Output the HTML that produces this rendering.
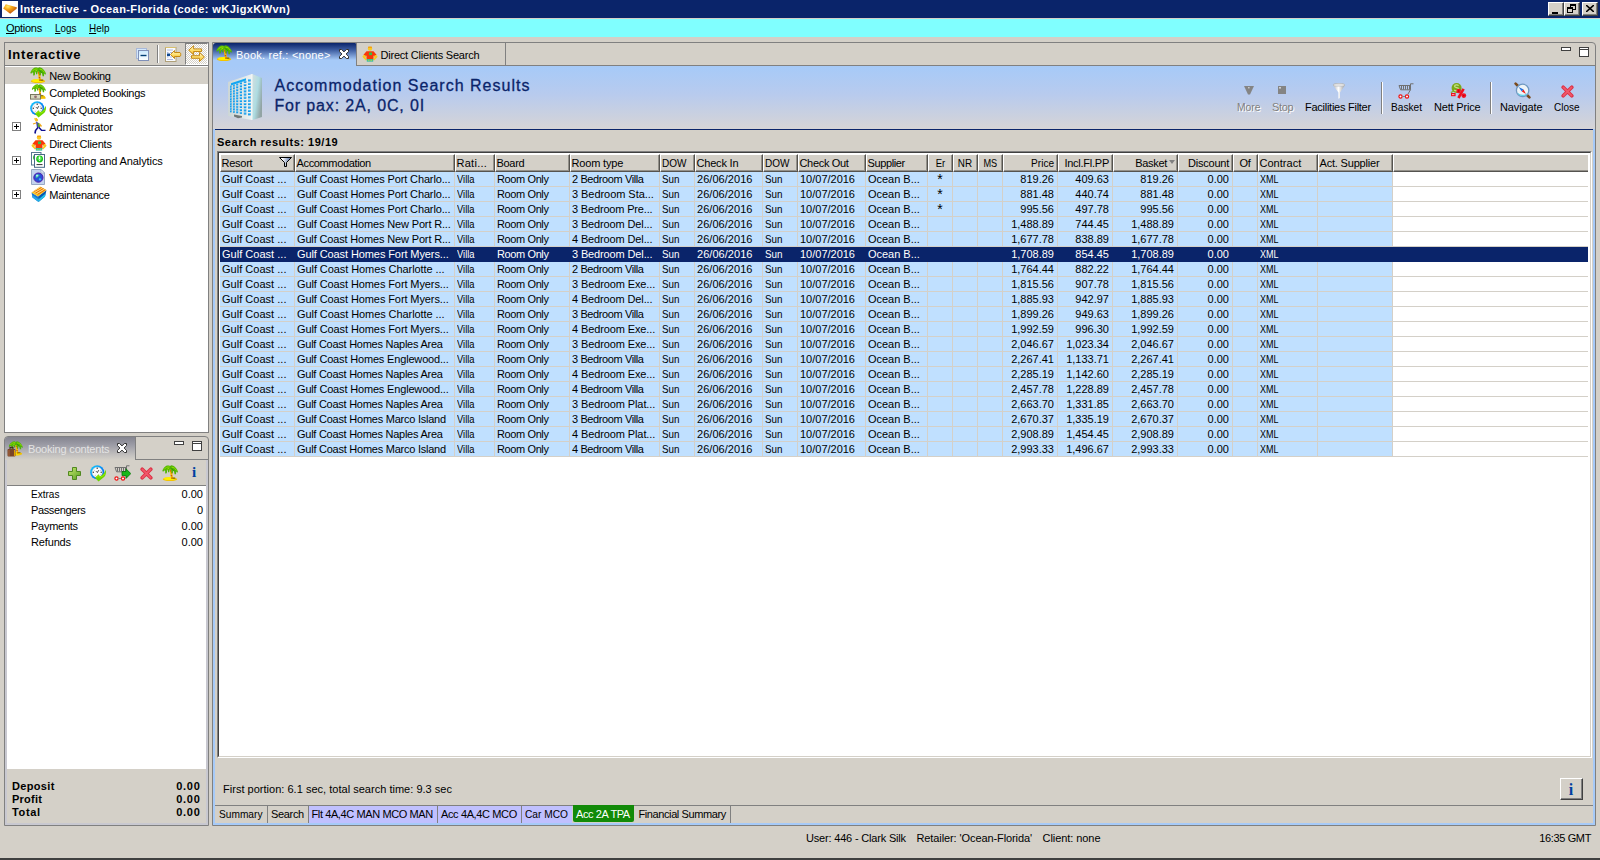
<!DOCTYPE html>
<html><head><meta charset="utf-8"><title>Interactive</title>
<style>
*{box-sizing:border-box;margin:0;padding:0}
html,body{width:1600px;height:860px;overflow:hidden}
body{background:#d4d0c8;font-family:"Liberation Sans",sans-serif;font-size:11px;color:#000;position:relative;line-height:13px}
.a{position:absolute}
.a>svg,.wb>svg{display:block}
.t{position:absolute;white-space:nowrap;line-height:13px;height:13px}
.b{font-weight:bold}
u{text-decoration:underline}
#title{left:0;top:0;width:1600px;height:18px;background:#0a246a}
#menu{left:0;top:19px;width:1600px;height:18px;background:#80ffff}
.wb{position:absolute;top:2px;width:16px;height:14px;background:#d4d0c8;border:1px solid;border-color:#fff #404040 #404040 #fff;box-shadow:inset -1px -1px 0 #808080}
.wb i{position:absolute;display:block}
.panel{position:absolute;border:1px solid #808080;background:#d4d0c8}
.tblbox{position:absolute;left:217px;top:151px;width:1375px;height:607px;background:#fff;border:1px solid;border-color:#808080 #fff #fff #808080}
.tblbox:before{content:"";position:absolute;left:0;top:0;right:0;bottom:0;border:1px solid;border-color:#404040 #d4d0c8 #d4d0c8 #404040}
.th{position:absolute;top:154px;height:18px;background:#d4d0c8;border-left:1px solid #fff;border-right:1px solid #55534f;border-bottom:1px solid #55534f;border-top:1px solid #fff;box-shadow:inset -1px -1px 0 #94918a;white-space:nowrap;overflow:hidden;line-height:13px;padding:2px 0 0 .5px}
.th.r{text-align:right;padding-right:3px}
.th.bk{padding-right:10px}
.th.c{text-align:center;padding-left:0;padding-right:1px}
.tr{position:absolute;left:220px;width:1173px;height:14px;background:#c0e0ff}
.hl{position:absolute;left:220px;width:1368px;height:1px;background:#d4d0c8}
.td{position:absolute;top:0;height:14px;line-height:13px;padding:1px 0 0 2px;white-space:nowrap;overflow:hidden;border-right:1px solid #d4d0c8}
.td.r{text-align:right;padding-right:3px}
.td.c{text-align:center;padding-left:0}
.tr.sel{background:#0a246a;color:#fff;width:1368px;height:15px}
.tr.sel .td{border-right-color:#0a246a}
.flt{position:absolute;left:58px;top:2px}
.sortarr{position:absolute;right:2px;top:5px;width:0;height:0;border-left:3.5px solid transparent;border-right:3.5px solid transparent;border-top:4px solid #808080}

.ast{font-size:14px;line-height:13px;position:relative;top:0}

</style></head>
<body>
<!-- title bar -->
<div class="a" id="title"></div>
<div class="a" style="left:2px;top:1px;width:16px;height:16px"><svg width="16" height="16" viewBox="0 0 16 16"><defs><radialGradient id="og" cx=".35" cy=".25" r=".8"><stop offset="0" stop-color="#ffe868"/><stop offset=".35" stop-color="#f8a818"/><stop offset="1" stop-color="#b84808"/></radialGradient></defs><rect width="16" height="16" fill="#fff"/><path d="M1.2 7.4L3.8 3.2L14.8 6.2L14.6 7.8L8.2 12.8Z" fill="url(#og)"/></svg></div>
<div class="wb" style="left:1548px"><i style="left:3px;top:9px;width:6px;height:2px;background:#000"></i></div>
<div class="wb" style="left:1564px"><i style="left:5px;top:1px;width:6px;height:6px;border:1px solid #000;border-top-width:2px"></i><i style="left:2px;top:4px;width:6px;height:6px;border:1px solid #000;border-top-width:2px;background:#d4d0c8"></i></div>
<div class="wb" style="left:1582px"><svg class="a" style="left:3px;top:2px" width="8" height="7" viewBox="0 0 8 7"><path d="M0 0L8 7M8 0L0 7" stroke="#000" stroke-width="1.6"/></svg></div>
<!-- menu -->
<div class="a" id="menu"></div>

<!-- left panel 1 -->
<div class="panel" style="left:4px;top:42px;width:205px;height:391px"></div>
<div class="a" style="left:5px;top:65px;width:203px;height:1px;background:#808080"></div>
<div class="a" style="left:5px;top:66px;width:203px;height:366px;background:#fff"></div>
<div class="a" style="left:5px;top:67px;width:203px;height:17px;background:#d4d0c8"></div>
<div class="a" style="left:136px;top:48px"><svg width="13" height="13" viewBox="0 0 13 13"><defs><linearGradient id="cg" x1="0" y1="0" x2="0" y2="1"><stop offset="0" stop-color="#c8e8ff"/><stop offset="1" stop-color="#fff"/></linearGradient></defs><rect x=".5" y=".5" width="10" height="10" fill="#d4e8fc" stroke="#a8b8d8"/><rect x="2.5" y="2.5" width="10" height="10" fill="url(#cg)" stroke="#8090b8"/><path d="M4.5 7.5h6" stroke="#003c74" stroke-width="1.4"/></svg></div>
<div class="a" style="left:157px;top:45px;width:2px;height:18px;border-left:1px solid #808080;border-right:1px solid #fff"></div>
<div class="a" style="left:165px;top:47px"><svg width="17" height="15" viewBox="0 0 17 15"><defs><linearGradient id="ag" x1="0" y1="0" x2="0" y2="1"><stop offset="0" stop-color="#fff8d0"/><stop offset=".5" stop-color="#ffe070"/><stop offset="1" stop-color="#f0b020"/></linearGradient></defs><rect x=".5" y=".5" width="10.5" height="14" fill="#f8fbff" stroke="#b0a078"/><path d="M.5 1V.5H11" stroke="#d8c070" fill="none"/><path d="M2 3h6M2 5.5h1.5M5 5.5h2M2 10h1.5M5 10h2M2 12.5h6" stroke="#b0b8e0" stroke-width="1"/><rect x="2" y="6.5" width="3" height="2.6" fill="#104890"/><path d="M5.5 7.5L9.5 3.5V5.5H15C16 5.5 16 9.5 15 9.5H9.5V11.5Z" fill="url(#ag)" stroke="#c08008" stroke-width=".9"/></svg></div>
<div class="a" style="left:185px;top:43px;width:23px;height:22px;background:repeating-conic-gradient(#fff 0 25%,#d4d0c8 0 50%) 0 0/2px 2px;border:1px solid;border-color:#808080 #fff #fff #808080"></div>
<div class="a" style="left:188px;top:45px"><svg width="17" height="17" viewBox="0 0 17 17"><defs><linearGradient id="ag2" x1="0" y1="0" x2="0" y2="1"><stop offset="0" stop-color="#fff8d0"/><stop offset=".5" stop-color="#ffe070"/><stop offset="1" stop-color="#f0b020"/></linearGradient></defs><path d="M.7 5.2L5.6 .7V3.9H13.6V6.5H5.6V9.7Z" fill="url(#ag2)" stroke="#c08008" stroke-width=".9"/><path d="M16.4 12L11.5 7.5V10.7H3.5V13.3H11.5V16.5Z" fill="url(#ag2)" stroke="#c08008" stroke-width=".9"/></svg></div>
<div class="a" style="left:30px;top:67px"><svg width="16" height="16" viewBox="0 0 16 16"><ellipse cx="8" cy="14.2" rx="7.2" ry="2" fill="#f4c400"/><ellipse cx="7.6" cy="13.6" rx="5.6" ry="1.5" fill="#fff000"/><path d="M7.3 3.5L9.3 3.5L11.2 13.8L9.2 13.8Z" fill="#f6bc00"/><path d="M8 5.2h1.4v1.2h-1.4zM9.4 7h1.2v1.6h-1.2zM8.8 10h1.3v1.2h-1.3zM9.2 12.6h1.4v1.2h-1.4z" fill="#c85a04"/><rect x="10.6" y="12.6" width="2.6" height="1.1" fill="#6a4a10"/><path d="M.3 5.9C1 3.6 2.6 1.6 4.8 .5L7 .4L8 1L9.4 .2L11.2 .8C13.4 2 15.2 4.2 15.9 6.6L15.5 7.8L14.2 6.4L14 9.3L12.6 9.2L12 6.4L11.1 5.8L10.6 8.2L9.5 8L9.1 4.8L7.6 4.4L7.2 7.2L6 7.2L6 4.9L5.1 5.5L4.8 8.3L3.2 8.6L3.2 5.7L2.1 5.4L1.2 6.8Z" fill="#4fb406"/><path d="M2 4.5C3.4 2.6 5.4 1.6 7.6 2M9.6 2.2C11.6 2.2 13.2 3.4 14.4 5.4M7.2 3.2C6 3.6 5.2 4.2 4.6 5" stroke="#96e000" stroke-width="1" fill="none"/><path d="M9.4 3.6C10.4 4 11.4 4.8 12 5.8" stroke="#2c9000" stroke-width=".8" fill="none"/></svg></div>
<div class="a" style="left:30px;top:84px"><svg width="16" height="16" viewBox="0 0 16 16"><g transform="translate(1.5 0) scale(.9)"><ellipse cx="8" cy="14.2" rx="7.2" ry="2" fill="#f4c400"/><ellipse cx="7.6" cy="13.6" rx="5.6" ry="1.5" fill="#fff000"/><path d="M7.3 3.5L9.3 3.5L11.2 13.8L9.2 13.8Z" fill="#f6bc00"/><path d="M8 5.2h1.4v1.2h-1.4zM9.4 7h1.2v1.6h-1.2zM8.8 10h1.3v1.2h-1.3zM9.2 12.6h1.4v1.2h-1.4z" fill="#c85a04"/><rect x="10.6" y="12.6" width="2.6" height="1.1" fill="#6a4a10"/><path d="M.3 5.9C1 3.6 2.6 1.6 4.8 .5L7 .4L8 1L9.4 .2L11.2 .8C13.4 2 15.2 4.2 15.9 6.6L15.5 7.8L14.2 6.4L14 9.3L12.6 9.2L12 6.4L11.1 5.8L10.6 8.2L9.5 8L9.1 4.8L7.6 4.4L7.2 7.2L6 7.2L6 4.9L5.1 5.5L4.8 8.3L3.2 8.6L3.2 5.7L2.1 5.4L1.2 6.8Z" fill="#4fb406"/><path d="M2 4.5C3.4 2.6 5.4 1.6 7.6 2M9.6 2.2C11.6 2.2 13.2 3.4 14.4 5.4M7.2 3.2C6 3.6 5.2 4.2 4.6 5" stroke="#96e000" stroke-width="1" fill="none"/><path d="M9.4 3.6C10.4 4 11.4 4.8 12 5.8" stroke="#2c9000" stroke-width=".8" fill="none"/></g><rect x="0.5" y="10.5" width="10" height="4.6" fill="#d8d8c0" stroke="#787860" stroke-width="1"/><circle cx="5.5" cy="12.8" r="1.4" fill="#907070"/><rect x="11" y="13" width="4.5" height="1.8" fill="#f4c000"/></svg></div>
<div class="a" style="left:30px;top:101px"><svg width="17" height="17" viewBox="0 0 17 17"><defs><linearGradient id="ck" x1="0" y1="0" x2="1" y2="1"><stop offset="0" stop-color="#10d0ff"/><stop offset=".5" stop-color="#0890f8"/><stop offset="1" stop-color="#0858f0"/></linearGradient></defs><circle cx="7.2" cy="7.3" r="7" fill="url(#ck)"/><circle cx="7.2" cy="7.3" r="5.1" fill="#fbfbfb" stroke="#e8d8d0" stroke-width=".5"/><circle cx="7.2" cy="3.3" r=".7" fill="#303030"/><circle cx="3.3" cy="7.3" r=".7" fill="#303030"/><circle cx="11.2" cy="7.3" r=".7" fill="#303030"/><circle cx="10.2" cy="5.2" r=".45" fill="#808890"/><circle cx="4.4" cy="5.2" r=".45" fill="#a0a0a8"/><circle cx="10.2" cy="9.4" r=".45" fill="#9090a0"/><circle cx="5.2" cy="10.2" r=".45" fill="#9090a0"/><path d="M6 6.2L7.4 7.6L8.6 5.2" stroke="#484848" stroke-width="1" fill="none"/><path d="M15.9 4.8C16.3 8 15.6 10.6 14.4 11.8L8.5 16.4L5 12.8L8.6 9.2L9.6 11C11.6 11 13.6 9.4 15.9 4.8Z" fill="#6cd400"/><path d="M6.4 12.8L8.6 10.6L9.4 12C11.4 12 13.4 11 14.8 8.6" stroke="#98f000" stroke-width="1" fill="none"/></svg></div>
<div class="a" style="left:30px;top:118px"><svg width="16" height="16" viewBox="0 0 16 16"><circle cx="6.5" cy="2" r="1.6" fill="#f8c020"/><path d="M4 1L7 .4" stroke="#f8c020" stroke-width="1"/><path d="M6 3.5L9.5 5.5L10 9.5L7 10Z" fill="#3838a8"/><path d="M7.5 4.5L9.5 5.8L10 9L8 9Z" fill="#58a828"/><path d="M9.5 6L11.5 8.5" stroke="#f0a818" stroke-width="1.4"/><path d="M6 5L3 6" stroke="#f0a818" stroke-width="1.2"/><path d="M8 9.5L5.5 12.5L5 15.5" stroke="#101090" stroke-width="1.6" fill="none"/><path d="M9 9.5L11.5 12.2L15.5 12.4" stroke="#101090" stroke-width="1.4" fill="none"/></svg></div>
<div class="a" style="left:30.5px;top:135px"><svg width="16" height="16" viewBox="0 0 16 16"><circle cx="8" cy="2.6" r="2.2" fill="#f8c820"/><path d="M6 1.2h4" stroke="#f89000" stroke-width="1"/><path d="M4.5 5.2h7l3 3.6-1.6 2-1.4-1.2v4.2h-7v-4.2l-1.4 1.2-1.6-2z" fill="#f83808"/><circle cx="2.3" cy="10.6" r="1.7" fill="#f8c820"/><circle cx="13.7" cy="10.6" r="1.7" fill="#f8c820"/><path d="M2 11.5L4.5 14M14 11.5L11.5 14" stroke="#f8c820" stroke-width="1.6"/><rect x="7" y="6.5" width="3" height="2.6" fill="#38c048"/><rect x="4.8" y="13" width="6.4" height="2.6" fill="#18b8b0"/><path d="M6.2 13.6v1.6M8 13.6v1.6M9.8 13.6v1.6" stroke="#f8e020" stroke-width=".8"/></svg></div>
<div class="a" style="left:31px;top:152px"><svg width="16" height="16" viewBox="0 0 16 16"><rect x=".5" y=".5" width="9.5" height="12.5" fill="#fff" stroke="#587890"/><circle cx="5" cy="5.5" r="3" fill="#30c030"/><rect x="3.5" y="2.5" width="10" height="12.8" fill="#fff" stroke="#486888"/><circle cx="8.6" cy="7" r="3.4" fill="#18c018"/><circle cx="8.6" cy="6.4" r="2.2" fill="#60e860"/><path d="M8.6 4.6v2.6M8.6 8.2v.9" stroke="#fff" stroke-width="1.1"/><path d="M5.5 12.6h6" stroke="#303030" stroke-width="1"/></svg></div>
<div class="a" style="left:31px;top:169px"><svg width="16" height="16" viewBox="0 0 16 16"><path d="M.5 .5H10L13.5 4V15.5H.5Z" fill="#c4d4ee" stroke="#98a8c4"/><path d="M10 .5V4H13.5Z" fill="#f4f8ff" stroke="#98a8c4" stroke-width=".8"/><circle cx="7.4" cy="8.6" r="4.6" fill="#2850d8"/><circle cx="7.4" cy="8.6" r="4.6" fill="none" stroke="#5018a8" stroke-width="1"/><path d="M5 6.2C6.4 5 8 5.4 8.6 6.6C8 7.6 6.8 7.4 6.4 8.6C5.8 9.6 5 8.8 4.6 8Z" fill="#38c8a0"/><path d="M8 9.4C9.2 9 10.4 9.6 10.2 10.8C9.4 11.8 8.2 11.6 7.8 10.6Z" fill="#30c0e8"/><circle cx="6" cy="6.6" r="1.1" fill="#c8f0ff" opacity=".8"/></svg></div>
<div class="a" style="left:31px;top:186px"><svg width="16" height="16" viewBox="0 0 16 16"><path d="M.5 6.5L7 10.5L7.5 16L1.5 11.5Z" fill="#1878d0"/><path d="M7 10.5L15.5 4L14 10.5L7.5 16Z" fill="#0858b0"/><path d="M7.2 13.5L14.6 7.5L14 10.5L7.5 16Z" fill="#20c0e8"/><path d="M1 9L7.2 13L7.5 16L1.5 11.5Z" fill="#28a8e8"/><path d="M.5 6.5L9 .5L15.5 4L7 10.5Z" fill="#f8c020"/><path d="M2.5 5.8L10.5 1.4M4.5 7L12.5 2.4M6.4 8.4L14.4 3.6" stroke="#e86808" stroke-width="1.1"/><path d="M1.5 6L9.5 1M3.5 6.6L11.5 2M5.5 7.8L13.5 3" stroke="#fff0a0" stroke-width=".7"/></svg></div>
<div class="a" style="left:12px;top:122px"><svg width="9" height="9" viewBox="0 0 9 9"><rect x=".5" y=".5" width="8" height="8" fill="#fff" stroke="#808080"/><path d="M2 4.5h5M4.5 2v5" stroke="#000" stroke-width="1"/></svg></div>
<div class="a" style="left:12px;top:156px"><svg width="9" height="9" viewBox="0 0 9 9"><rect x=".5" y=".5" width="8" height="8" fill="#fff" stroke="#808080"/><path d="M2 4.5h5M4.5 2v5" stroke="#000" stroke-width="1"/></svg></div>
<div class="a" style="left:12px;top:190px"><svg width="9" height="9" viewBox="0 0 9 9"><rect x=".5" y=".5" width="8" height="8" fill="#fff" stroke="#808080"/><path d="M2 4.5h5M4.5 2v5" stroke="#000" stroke-width="1"/></svg></div>

<!-- left panel 2 -->
<div class="panel" style="left:4px;top:436px;width:205px;height:390px;border-radius:4px 4px 0 0"></div>
<div class="a" style="left:5px;top:437px;width:131px;height:23px;background:linear-gradient(#84848f,#9c9ca6 35%,#c4c2c0 80%,#d4d0c8);border-right:1px solid #808080;border-radius:3px 0 0 0"></div>
<div class="a" style="left:135px;top:459px;width:73px;height:1px;background:#808080"></div>
<div class="a" style="left:5px;top:460px;width:203px;height:365px;border:2px solid #c8c8d0;border-top:0"></div>
<div class="a" style="left:7px;top:485px;width:199px;height:1px;background:#808080"></div>
<div class="a" style="left:7px;top:486px;width:199px;height:283px;background:#fff"></div>
<div class="a" style="left:7px;top:441px"><svg width="16" height="16" viewBox="0 0 16 16"><g transform="translate(1.5 0) scale(.9)"><ellipse cx="8" cy="14.2" rx="7.2" ry="2" fill="#f4c400"/><ellipse cx="7.6" cy="13.6" rx="5.6" ry="1.5" fill="#fff000"/><path d="M7.3 3.5L9.3 3.5L11.2 13.8L9.2 13.8Z" fill="#f6bc00"/><path d="M8 5.2h1.4v1.2h-1.4zM9.4 7h1.2v1.6h-1.2zM8.8 10h1.3v1.2h-1.3zM9.2 12.6h1.4v1.2h-1.4z" fill="#c85a04"/><rect x="10.6" y="12.6" width="2.6" height="1.1" fill="#6a4a10"/><path d="M.3 5.9C1 3.6 2.6 1.6 4.8 .5L7 .4L8 1L9.4 .2L11.2 .8C13.4 2 15.2 4.2 15.9 6.6L15.5 7.8L14.2 6.4L14 9.3L12.6 9.2L12 6.4L11.1 5.8L10.6 8.2L9.5 8L9.1 4.8L7.6 4.4L7.2 7.2L6 7.2L6 4.9L5.1 5.5L4.8 8.3L3.2 8.6L3.2 5.7L2.1 5.4L1.2 6.8Z" fill="#4fb406"/><path d="M2 4.5C3.4 2.6 5.4 1.6 7.6 2M9.6 2.2C11.6 2.2 13.2 3.4 14.4 5.4M7.2 3.2C6 3.6 5.2 4.2 4.6 5" stroke="#96e000" stroke-width="1" fill="none"/><path d="M9.4 3.6C10.4 4 11.4 4.8 12 5.8" stroke="#2c9000" stroke-width=".8" fill="none"/></g><rect x="3" y="6.3" width="3" height="2" fill="none" stroke="#402010" stroke-width="1"/><rect x="0.5" y="8" width="8" height="7.5" rx="1" fill="#7a4428"/><rect x="1.5" y="9" width="1" height="6" fill="#a86840"/><rect x="7" y="9" width="1" height="6" fill="#e0a000"/></svg></div>
<div class="a" style="left:117px;top:443px"><svg width="10" height="10" viewBox="0 0 10 10"><path d="M.5 .5H2.6L5 2.9L7.4 .5H9.5V2.6L7.1 5L9.5 7.4V9.5H7.4L5 7.1L2.6 9.5H.5V7.4L2.9 5L.5 2.6Z" fill="#fff" stroke="#303030" stroke-width="1"/></svg></div>
<div class="a" style="left:174px;top:441px"><svg width="10" height="4" viewBox="0 0 10 4"><rect x=".5" y=".5" width="9" height="3" fill="#fff" stroke="#404040"/></svg></div>
<div class="a" style="left:192px;top:441px"><svg width="10" height="10" viewBox="0 0 10 10"><rect x=".5" y=".5" width="9" height="9" fill="#fff" stroke="#404040"/><path d="M.5 2.5h9" stroke="#404040"/></svg></div>
<div class="a" style="left:68px;top:467px"><svg width="13" height="13" viewBox="0 0 13 13"><defs><linearGradient id="gp" x1="0" y1="0" x2="1" y2="1"><stop offset="0" stop-color="#c8e870"/><stop offset="1" stop-color="#58a020"/></linearGradient></defs><path d="M4.5 .5H8.5V4.5H12.5V8.5H8.5V12.5H4.5V8.5H.5V4.5H4.5Z" fill="url(#gp)" stroke="#508820" stroke-width="1"/></svg></div>
<div class="a" style="left:90px;top:465px"><svg width="17" height="17" viewBox="0 0 17 17"><defs><linearGradient id="ck" x1="0" y1="0" x2="1" y2="1"><stop offset="0" stop-color="#10d0ff"/><stop offset=".5" stop-color="#0890f8"/><stop offset="1" stop-color="#0858f0"/></linearGradient></defs><circle cx="7.2" cy="7.3" r="7" fill="url(#ck)"/><circle cx="7.2" cy="7.3" r="5.1" fill="#fbfbfb" stroke="#e8d8d0" stroke-width=".5"/><circle cx="7.2" cy="3.3" r=".7" fill="#303030"/><circle cx="3.3" cy="7.3" r=".7" fill="#303030"/><circle cx="11.2" cy="7.3" r=".7" fill="#303030"/><circle cx="10.2" cy="5.2" r=".45" fill="#808890"/><circle cx="4.4" cy="5.2" r=".45" fill="#a0a0a8"/><circle cx="10.2" cy="9.4" r=".45" fill="#9090a0"/><circle cx="5.2" cy="10.2" r=".45" fill="#9090a0"/><path d="M6 6.2L7.4 7.6L8.6 5.2" stroke="#484848" stroke-width="1" fill="none"/><path d="M15.9 4.8C16.3 8 15.6 10.6 14.4 11.8L8.5 16.4L5 12.8L8.6 9.2L9.6 11C11.6 11 13.6 9.4 15.9 4.8Z" fill="#6cd400"/><path d="M6.4 12.8L8.6 10.6L9.4 12C11.4 12 13.4 11 14.8 8.6" stroke="#98f000" stroke-width="1" fill="none"/></svg></div>
<div class="a" style="left:114px;top:465px"><svg width="17" height="16" viewBox="0 0 17 16"><path d="M1 2.5H12.5V6.8H2.6Z" fill="none" stroke="#707070" stroke-width="1"/><path d="M3.5 2.5V6.5M5.5 2.5V6.5M7.5 2.5V6.5M9.5 2.5V6.5M11.5 2.5V6.5" stroke="#707070" stroke-width="1"/><path d="M12.5 5V.8H15.5M12.5 6.8L10 11" stroke="#707070" stroke-width="1" fill="none"/><circle cx="2.5" cy="13.5" r="1.6" fill="#fff" stroke="#f01010" stroke-width="1.2"/><circle cx="9" cy="13.5" r="1.6" fill="#fff" stroke="#f01010" stroke-width="1.2"/><path d="M4.4 13.5h2.8" stroke="#808080" stroke-width="1"/><path d="M8 6.5H12V3.8L16.8 8.6L12 13.4V10.6H8Z" fill="#18b818" stroke="#087008" stroke-width=".8"/></svg></div>
<div class="a" style="left:140px;top:467px"><svg width="13" height="13" viewBox="0 0 13 13"><path d="M2.2 2.2L10.8 10.8M10.8 2.2L2.2 10.8" stroke="#dc3044" stroke-width="3.6" stroke-linecap="round"/><path d="M2.4 2.4L10.6 10.6M10.6 2.4L2.4 10.6" stroke="#f0586a" stroke-width="1.8" stroke-linecap="round"/></svg></div>
<div class="a" style="left:162px;top:465px"><svg width="16" height="16" viewBox="0 0 16 16"><ellipse cx="8" cy="14.2" rx="7.2" ry="2" fill="#f4c400"/><ellipse cx="7.6" cy="13.6" rx="5.6" ry="1.5" fill="#fff000"/><path d="M7.3 3.5L9.3 3.5L11.2 13.8L9.2 13.8Z" fill="#f6bc00"/><path d="M8 5.2h1.4v1.2h-1.4zM9.4 7h1.2v1.6h-1.2zM8.8 10h1.3v1.2h-1.3zM9.2 12.6h1.4v1.2h-1.4z" fill="#c85a04"/><rect x="10.6" y="12.6" width="2.6" height="1.1" fill="#6a4a10"/><path d="M.3 5.9C1 3.6 2.6 1.6 4.8 .5L7 .4L8 1L9.4 .2L11.2 .8C13.4 2 15.2 4.2 15.9 6.6L15.5 7.8L14.2 6.4L14 9.3L12.6 9.2L12 6.4L11.1 5.8L10.6 8.2L9.5 8L9.1 4.8L7.6 4.4L7.2 7.2L6 7.2L6 4.9L5.1 5.5L4.8 8.3L3.2 8.6L3.2 5.7L2.1 5.4L1.2 6.8Z" fill="#4fb406"/><path d="M2 4.5C3.4 2.6 5.4 1.6 7.6 2M9.6 2.2C11.6 2.2 13.2 3.4 14.4 5.4M7.2 3.2C6 3.6 5.2 4.2 4.6 5" stroke="#96e000" stroke-width="1" fill="none"/><path d="M9.4 3.6C10.4 4 11.4 4.8 12 5.8" stroke="#2c9000" stroke-width=".8" fill="none"/></svg></div>
<div class="t" style="left:192px;top:464px;font:bold 15px 'Liberation Serif',serif;line-height:17px;height:17px;color:#0040a0">i</div>

<!-- right panel -->
<div class="panel" style="left:212px;top:42px;width:1384px;height:784px;border-radius:0 4px 0 0"></div>
<div class="a" style="left:213px;top:65px;width:1382px;height:1px;background:#808080"></div>
<div class="a" style="left:213px;top:66px;width:1382px;height:759px;background:#a6caf8"></div>
<div class="a" style="left:215px;top:66px;width:1378px;height:757px;background:#d4d0c8"></div>
<div class="a" style="left:213px;top:66px;width:1382px;height:63px;background:linear-gradient(#a6caf8,#b8cbee 45%,#d6d4d6)"></div>
<div class="a" style="left:215px;top:129px;width:1378px;height:1px;background:#0a246a"></div>
<!-- tabs -->
<div class="a" style="left:213px;top:43px;width:143px;height:23px;background:linear-gradient(#0a246a,#3c5ca0 30%,#a6caf8 74%);border-radius:3px 1px 0 0"></div>
<div class="a" style="left:356px;top:43px;width:1px;height:23px;background:#808080"></div>
<div class="a" style="left:505px;top:43px;width:1px;height:22px;background:#808080"></div>
<div class="a" style="left:216px;top:45px"><svg width="16" height="16" viewBox="0 0 16 16"><ellipse cx="8" cy="14.2" rx="7.2" ry="2" fill="#f4c400"/><ellipse cx="7.6" cy="13.6" rx="5.6" ry="1.5" fill="#fff000"/><path d="M7.3 3.5L9.3 3.5L11.2 13.8L9.2 13.8Z" fill="#f6bc00"/><path d="M8 5.2h1.4v1.2h-1.4zM9.4 7h1.2v1.6h-1.2zM8.8 10h1.3v1.2h-1.3zM9.2 12.6h1.4v1.2h-1.4z" fill="#c85a04"/><rect x="10.6" y="12.6" width="2.6" height="1.1" fill="#6a4a10"/><path d="M.3 5.9C1 3.6 2.6 1.6 4.8 .5L7 .4L8 1L9.4 .2L11.2 .8C13.4 2 15.2 4.2 15.9 6.6L15.5 7.8L14.2 6.4L14 9.3L12.6 9.2L12 6.4L11.1 5.8L10.6 8.2L9.5 8L9.1 4.8L7.6 4.4L7.2 7.2L6 7.2L6 4.9L5.1 5.5L4.8 8.3L3.2 8.6L3.2 5.7L2.1 5.4L1.2 6.8Z" fill="#4fb406"/><path d="M2 4.5C3.4 2.6 5.4 1.6 7.6 2M9.6 2.2C11.6 2.2 13.2 3.4 14.4 5.4M7.2 3.2C6 3.6 5.2 4.2 4.6 5" stroke="#96e000" stroke-width="1" fill="none"/><path d="M9.4 3.6C10.4 4 11.4 4.8 12 5.8" stroke="#2c9000" stroke-width=".8" fill="none"/></svg></div>
<div class="a" style="left:339px;top:49px"><svg width="10" height="10" viewBox="0 0 10 10"><path d="M.5 .5H2.6L5 2.9L7.4 .5H9.5V2.6L7.1 5L9.5 7.4V9.5H7.4L5 7.1L2.6 9.5H.5V7.4L2.9 5L.5 2.6Z" fill="#fff" stroke="#303030" stroke-width="1"/></svg></div>
<div class="a" style="left:362px;top:46px"><svg width="16" height="16" viewBox="0 0 16 16"><circle cx="8" cy="2.6" r="2.2" fill="#f8c820"/><path d="M6 1.2h4" stroke="#f89000" stroke-width="1"/><path d="M4.5 5.2h7l3 3.6-1.6 2-1.4-1.2v4.2h-7v-4.2l-1.4 1.2-1.6-2z" fill="#f83808"/><circle cx="2.3" cy="10.6" r="1.7" fill="#f8c820"/><circle cx="13.7" cy="10.6" r="1.7" fill="#f8c820"/><path d="M2 11.5L4.5 14M14 11.5L11.5 14" stroke="#f8c820" stroke-width="1.6"/><rect x="7" y="6.5" width="3" height="2.6" fill="#38c048"/><rect x="4.8" y="13" width="6.4" height="2.6" fill="#18b8b0"/><path d="M6.2 13.6v1.6M8 13.6v1.6M9.8 13.6v1.6" stroke="#f8e020" stroke-width=".8"/></svg></div>
<div class="a" style="left:1561px;top:47px"><svg width="10" height="4" viewBox="0 0 10 4"><rect x=".5" y=".5" width="9" height="3" fill="#fff" stroke="#404040"/></svg></div>
<div class="a" style="left:1579px;top:47px"><svg width="10" height="10" viewBox="0 0 10 10"><rect x=".5" y=".5" width="9" height="9" fill="#fff" stroke="#404040"/><path d="M.5 2.5h9" stroke="#404040"/></svg></div>
<div class="a" style="left:228px;top:74px"><svg width="35" height="47" viewBox="0 0 35 47"><defs><linearGradient id="hs" x1="0" y1="0" x2="1" y2=".6"><stop offset="0" stop-color="#d4dede"/><stop offset=".55" stop-color="#aedce2"/><stop offset="1" stop-color="#92a4a4"/></linearGradient><linearGradient id="hf" x1="0" x2="1"><stop offset="0" stop-color="#ccd6d6"/><stop offset="1" stop-color="#eef3f3"/></linearGradient></defs><path d="M0 8L24 0V46L0 42Z" fill="url(#hf)"/><path d="M24 0L34 4V43L24 46Z" fill="url(#hs)"/><path d="M24 0V46" stroke="#f4f8f8" stroke-width="1"/><path d="M3 9.2L18 4.2V6.4L3 11.4Z" fill="#12a6f2"/><rect x="2.0" y="11.7" width="1.6" height="2" fill="#1a9ae8"/><rect x="2.0" y="11.7" width="1.6" height=".7" fill="#60c8f8"/><rect x="2.0" y="14.1" width="1.6" height="2" fill="#1a9ae8"/><rect x="2.0" y="14.1" width="1.6" height=".7" fill="#60c8f8"/><rect x="2.0" y="16.6" width="1.6" height="2" fill="#1a9ae8"/><rect x="2.0" y="16.6" width="1.6" height=".7" fill="#60c8f8"/><rect x="2.0" y="19.0" width="1.6" height="2" fill="#1a9ae8"/><rect x="2.0" y="19.0" width="1.6" height=".7" fill="#60c8f8"/><rect x="2.0" y="21.5" width="1.6" height="2" fill="#1a9ae8"/><rect x="2.0" y="21.5" width="1.6" height=".7" fill="#60c8f8"/><rect x="2.0" y="24.0" width="1.6" height="2" fill="#1a9ae8"/><rect x="2.0" y="24.0" width="1.6" height=".7" fill="#60c8f8"/><rect x="2.0" y="26.4" width="1.6" height="2" fill="#1a9ae8"/><rect x="2.0" y="26.4" width="1.6" height=".7" fill="#60c8f8"/><rect x="2.0" y="28.9" width="1.6" height="2" fill="#1a9ae8"/><rect x="2.0" y="28.9" width="1.6" height=".7" fill="#60c8f8"/><rect x="2.0" y="31.3" width="1.6" height="2" fill="#1a9ae8"/><rect x="2.0" y="31.3" width="1.6" height=".7" fill="#60c8f8"/><rect x="2.0" y="33.8" width="1.6" height="2" fill="#1a9ae8"/><rect x="2.0" y="33.8" width="1.6" height=".7" fill="#60c8f8"/><rect x="2.0" y="36.3" width="1.6" height="2" fill="#1a9ae8"/><rect x="2.0" y="36.3" width="1.6" height=".7" fill="#60c8f8"/><rect x="5.0" y="10.6" width="1.8" height="2" fill="#1a9ae8"/><rect x="5.0" y="10.6" width="1.8" height=".7" fill="#60c8f8"/><rect x="5.0" y="13.2" width="1.8" height="2" fill="#1a9ae8"/><rect x="5.0" y="13.2" width="1.8" height=".7" fill="#60c8f8"/><rect x="5.0" y="15.9" width="1.8" height="2" fill="#1a9ae8"/><rect x="5.0" y="15.9" width="1.8" height=".7" fill="#60c8f8"/><rect x="5.0" y="18.5" width="1.8" height="2" fill="#1a9ae8"/><rect x="5.0" y="18.5" width="1.8" height=".7" fill="#60c8f8"/><rect x="5.0" y="21.1" width="1.8" height="2" fill="#1a9ae8"/><rect x="5.0" y="21.1" width="1.8" height=".7" fill="#60c8f8"/><rect x="5.0" y="23.7" width="1.8" height="2" fill="#1a9ae8"/><rect x="5.0" y="23.7" width="1.8" height=".7" fill="#60c8f8"/><rect x="5.0" y="26.3" width="1.8" height="2" fill="#1a9ae8"/><rect x="5.0" y="26.3" width="1.8" height=".7" fill="#60c8f8"/><rect x="5.0" y="28.9" width="1.8" height="2" fill="#1a9ae8"/><rect x="5.0" y="28.9" width="1.8" height=".7" fill="#60c8f8"/><rect x="5.0" y="31.6" width="1.8" height="2" fill="#1a9ae8"/><rect x="5.0" y="31.6" width="1.8" height=".7" fill="#60c8f8"/><rect x="5.0" y="34.2" width="1.8" height="2" fill="#1a9ae8"/><rect x="5.0" y="34.2" width="1.8" height=".7" fill="#60c8f8"/><rect x="5.0" y="36.8" width="1.8" height="2" fill="#1a9ae8"/><rect x="5.0" y="36.8" width="1.8" height=".7" fill="#60c8f8"/><rect x="8.2" y="9.5" width="2" height="2" fill="#1a9ae8"/><rect x="8.2" y="9.5" width="2" height=".7" fill="#60c8f8"/><rect x="8.2" y="12.3" width="2" height="2" fill="#1a9ae8"/><rect x="8.2" y="12.3" width="2" height=".7" fill="#60c8f8"/><rect x="8.2" y="15.1" width="2" height="2" fill="#1a9ae8"/><rect x="8.2" y="15.1" width="2" height=".7" fill="#60c8f8"/><rect x="8.2" y="17.9" width="2" height="2" fill="#1a9ae8"/><rect x="8.2" y="17.9" width="2" height=".7" fill="#60c8f8"/><rect x="8.2" y="20.7" width="2" height="2" fill="#1a9ae8"/><rect x="8.2" y="20.7" width="2" height=".7" fill="#60c8f8"/><rect x="8.2" y="23.4" width="2" height="2" fill="#1a9ae8"/><rect x="8.2" y="23.4" width="2" height=".7" fill="#60c8f8"/><rect x="8.2" y="26.2" width="2" height="2" fill="#1a9ae8"/><rect x="8.2" y="26.2" width="2" height=".7" fill="#60c8f8"/><rect x="8.2" y="29.0" width="2" height="2" fill="#1a9ae8"/><rect x="8.2" y="29.0" width="2" height=".7" fill="#60c8f8"/><rect x="8.2" y="31.8" width="2" height="2" fill="#1a9ae8"/><rect x="8.2" y="31.8" width="2" height=".7" fill="#60c8f8"/><rect x="8.2" y="34.6" width="2" height="2" fill="#1a9ae8"/><rect x="8.2" y="34.6" width="2" height=".7" fill="#60c8f8"/><rect x="8.2" y="37.3" width="2" height="2" fill="#1a9ae8"/><rect x="8.2" y="37.3" width="2" height=".7" fill="#60c8f8"/><rect x="11.8" y="8.3" width="2.2" height="2" fill="#1a9ae8"/><rect x="11.8" y="8.3" width="2.2" height=".7" fill="#60c8f8"/><rect x="11.8" y="11.3" width="2.2" height="2" fill="#1a9ae8"/><rect x="11.8" y="11.3" width="2.2" height=".7" fill="#60c8f8"/><rect x="11.8" y="14.2" width="2.2" height="2" fill="#1a9ae8"/><rect x="11.8" y="14.2" width="2.2" height=".7" fill="#60c8f8"/><rect x="11.8" y="17.2" width="2.2" height="2" fill="#1a9ae8"/><rect x="11.8" y="17.2" width="2.2" height=".7" fill="#60c8f8"/><rect x="11.8" y="20.2" width="2.2" height="2" fill="#1a9ae8"/><rect x="11.8" y="20.2" width="2.2" height=".7" fill="#60c8f8"/><rect x="11.8" y="23.1" width="2.2" height="2" fill="#1a9ae8"/><rect x="11.8" y="23.1" width="2.2" height=".7" fill="#60c8f8"/><rect x="11.8" y="26.1" width="2.2" height="2" fill="#1a9ae8"/><rect x="11.8" y="26.1" width="2.2" height=".7" fill="#60c8f8"/><rect x="11.8" y="29.1" width="2.2" height="2" fill="#1a9ae8"/><rect x="11.8" y="29.1" width="2.2" height=".7" fill="#60c8f8"/><rect x="11.8" y="32.0" width="2.2" height="2" fill="#1a9ae8"/><rect x="11.8" y="32.0" width="2.2" height=".7" fill="#60c8f8"/><rect x="11.8" y="35.0" width="2.2" height="2" fill="#1a9ae8"/><rect x="11.8" y="35.0" width="2.2" height=".7" fill="#60c8f8"/><rect x="11.8" y="37.9" width="2.2" height="2" fill="#1a9ae8"/><rect x="11.8" y="37.9" width="2.2" height=".7" fill="#60c8f8"/><rect x="15.8" y="6.9" width="2.5" height="2" fill="#1a9ae8"/><rect x="15.8" y="6.9" width="2.5" height=".7" fill="#60c8f8"/><rect x="15.8" y="10.1" width="2.5" height="2" fill="#1a9ae8"/><rect x="15.8" y="10.1" width="2.5" height=".7" fill="#60c8f8"/><rect x="15.8" y="13.3" width="2.5" height="2" fill="#1a9ae8"/><rect x="15.8" y="13.3" width="2.5" height=".7" fill="#60c8f8"/><rect x="15.8" y="16.4" width="2.5" height="2" fill="#1a9ae8"/><rect x="15.8" y="16.4" width="2.5" height=".7" fill="#60c8f8"/><rect x="15.8" y="19.6" width="2.5" height="2" fill="#1a9ae8"/><rect x="15.8" y="19.6" width="2.5" height=".7" fill="#60c8f8"/><rect x="15.8" y="22.8" width="2.5" height="2" fill="#1a9ae8"/><rect x="15.8" y="22.8" width="2.5" height=".7" fill="#60c8f8"/><rect x="15.8" y="26.0" width="2.5" height="2" fill="#1a9ae8"/><rect x="15.8" y="26.0" width="2.5" height=".7" fill="#60c8f8"/><rect x="15.8" y="29.1" width="2.5" height="2" fill="#1a9ae8"/><rect x="15.8" y="29.1" width="2.5" height=".7" fill="#60c8f8"/><rect x="15.8" y="32.3" width="2.5" height="2" fill="#1a9ae8"/><rect x="15.8" y="32.3" width="2.5" height=".7" fill="#60c8f8"/><rect x="15.8" y="35.5" width="2.5" height="2" fill="#1a9ae8"/><rect x="15.8" y="35.5" width="2.5" height=".7" fill="#60c8f8"/><rect x="15.8" y="38.6" width="2.5" height="2" fill="#1a9ae8"/><rect x="15.8" y="38.6" width="2.5" height=".7" fill="#60c8f8"/><rect x="20.0" y="5.5" width="2.7" height="2" fill="#1a9ae8"/><rect x="20.0" y="5.5" width="2.7" height=".7" fill="#60c8f8"/><rect x="20.0" y="8.9" width="2.7" height="2" fill="#1a9ae8"/><rect x="20.0" y="8.9" width="2.7" height=".7" fill="#60c8f8"/><rect x="20.0" y="12.3" width="2.7" height="2" fill="#1a9ae8"/><rect x="20.0" y="12.3" width="2.7" height=".7" fill="#60c8f8"/><rect x="20.0" y="15.6" width="2.7" height="2" fill="#1a9ae8"/><rect x="20.0" y="15.6" width="2.7" height=".7" fill="#60c8f8"/><rect x="20.0" y="19.0" width="2.7" height="2" fill="#1a9ae8"/><rect x="20.0" y="19.0" width="2.7" height=".7" fill="#60c8f8"/><rect x="20.0" y="22.4" width="2.7" height="2" fill="#1a9ae8"/><rect x="20.0" y="22.4" width="2.7" height=".7" fill="#60c8f8"/><rect x="20.0" y="25.8" width="2.7" height="2" fill="#1a9ae8"/><rect x="20.0" y="25.8" width="2.7" height=".7" fill="#60c8f8"/><rect x="20.0" y="29.2" width="2.7" height="2" fill="#1a9ae8"/><rect x="20.0" y="29.2" width="2.7" height=".7" fill="#60c8f8"/><rect x="20.0" y="32.6" width="2.7" height="2" fill="#1a9ae8"/><rect x="20.0" y="32.6" width="2.7" height=".7" fill="#60c8f8"/><rect x="20.0" y="36.0" width="2.7" height="2" fill="#1a9ae8"/><rect x="20.0" y="36.0" width="2.7" height=".7" fill="#60c8f8"/><rect x="20.0" y="39.4" width="2.7" height="2" fill="#1a9ae8"/><rect x="20.0" y="39.4" width="2.7" height=".7" fill="#60c8f8"/><path d="M6 40.6L14 42V43.6L10 44.2L6 42.4Z" fill="#707878"/></svg></div>
<!-- toolbar -->
<div class="a" style="left:1244px;top:86px"><svg width="10" height="9" viewBox="0 0 10 9"><path d="M0 0H10L6 8.5H4Z" fill="#848484"/><rect x="4" y="1" width="1.6" height="1.4" fill="#c8c8c8"/></svg></div>
<div class="a" style="left:1278px;top:86px"><svg width="8" height="8" viewBox="0 0 8 8"><rect width="8" height="8" fill="#848484"/><rect x="1" y="1" width="2" height="1.6" fill="#d0d0d0"/></svg></div>
<div class="a" style="left:1333px;top:83px"><svg width="12" height="16" viewBox="0 0 12 16"><defs><linearGradient id="fu" x1="0" x2="1"><stop offset="0" stop-color="#b8b8b8"/><stop offset=".45" stop-color="#fff"/><stop offset="1" stop-color="#a0a0a0"/></linearGradient></defs><ellipse cx="6" cy="2" rx="5.8" ry="1.8" fill="#e0e0e0" stroke="#a8a8a8" stroke-width=".6"/><path d="M.3 2.4C2 4 10 4 11.7 2.4L7 9.4V15L5.4 15.8V9.4Z" fill="url(#fu)"/></svg></div>
<div class="a" style="left:1381px;top:82px;width:2px;height:32px;border-left:1px solid #808080;border-right:1px solid #fff"></div>
<div class="a" style="left:1398px;top:83px"><svg width="16" height="16" viewBox="0 0 16 16"><path d="M1 2.5H12.5V6.8H2.6Z" fill="none" stroke="#707070" stroke-width="1"/><path d="M3.5 2.5V6.5M5.5 2.5V6.5M7.5 2.5V6.5M9.5 2.5V6.5M11.5 2.5V6.5" stroke="#707070" stroke-width="1"/><path d="M12.5 5V.8H15.5M12.5 6.8L10 11" stroke="#707070" stroke-width="1" fill="none"/><circle cx="2.5" cy="13.5" r="1.6" fill="#fff" stroke="#f01010" stroke-width="1.2"/><circle cx="9" cy="13.5" r="1.6" fill="#fff" stroke="#f01010" stroke-width="1.2"/><path d="M4.4 13.5h2.8" stroke="#808080" stroke-width="1"/></svg></div>
<div class="a" style="left:1450px;top:83px"><svg width="17" height="16" viewBox="0 0 17 16"><circle cx="6.6" cy="5" r="5" fill="#7ca818"/><path d="M4.2 7C5.4 8.2 8.8 8 8.8 6C8.8 4.2 4.6 5 4.6 3.2C4.6 1.6 7.6 1.6 8.6 2.6" stroke="#c4e088" stroke-width="1.3" fill="none"/><path d="M.8 9.5L3 8.5" stroke="#7ca818" stroke-width="1.2"/><rect x="1" y="10" width="4.6" height="3.2" fill="#f01020"/><path d="M2 11.6h2.4" stroke="#f8b0b0" stroke-width="1"/><circle cx="8.6" cy="8" r="2.3" fill="#f01020"/><circle cx="13.8" cy="12.6" r="2.4" fill="#f01020"/><path d="M13.6 5.8L8.4 15" stroke="#f01020" stroke-width="2.6"/><circle cx="8.6" cy="8" r=".7" fill="#b00010"/><circle cx="13.8" cy="12.6" r=".7" fill="#b00010"/></svg></div>
<div class="a" style="left:1490px;top:82px;width:2px;height:32px;border-left:1px solid #808080;border-right:1px solid #fff"></div>
<div class="a" style="left:1514px;top:82px"><svg width="17" height="17" viewBox="0 0 17 17"><path d="M1.6 1.6L4 4M15.4 15.4L13 13" stroke="#7a4a1c" stroke-width="2.6" stroke-linecap="round"/><circle cx="8.6" cy="8.4" r="6.2" fill="#eef4f8" stroke="#7098c0" stroke-width="1.3"/><path d="M3.4 10.5A5.6 5.6 0 0 0 13.8 10.5A7 7 0 0 1 3.4 10.5Z" fill="#58d0e8"/><path d="M4.6 5L9.6 7.6L7.8 9.4Z" fill="#2070e0"/><path d="M12 12L7.8 9.4L9.6 7.6Z" fill="#f02018"/></svg></div>
<div class="a" style="left:1561px;top:85px"><svg width="13" height="13" viewBox="0 0 13 13"><path d="M2.2 2.2L10.8 10.8M10.8 2.2L2.2 10.8" stroke="#dc3044" stroke-width="3.6" stroke-linecap="round"/><path d="M2.4 2.4L10.6 10.6M10.6 2.4L2.4 10.6" stroke="#f0586a" stroke-width="1.8" stroke-linecap="round"/></svg></div>
<!-- table box -->
<div class="tblbox"></div>
<!-- info button -->
<div class="a" style="left:1560px;top:778px;width:23px;height:22px;background:#d4d0c8;border:1px solid;border-color:#fff #404040 #404040 #fff;box-shadow:inset -1px -1px 0 #808080"></div>
<div class="t" style="left:1568.7px;top:781px;font:bold 16px 'Liberation Serif',serif;line-height:18px;height:18px;color:#0040a0">i</div>
<!-- bottom tabs -->
<div class="a" style="left:215px;top:805px;width:1378px;height:1px;background:#808080"></div>
<div class="a" style="left:309px;top:806px;width:263px;height:17px;background:#c0c0ff"></div>
<div class="a" style="left:573px;top:805px;width:61px;height:17px;background:#128a08;border-radius:0 0 2px 2px"></div>
<div class="a" style="left:267px;top:806px;width:1px;height:17px;background:#808080"></div>
<div class="a" style="left:308px;top:806px;width:1px;height:17px;background:#808080"></div>
<div class="a" style="left:437px;top:806px;width:1px;height:17px;background:#808080"></div>
<div class="a" style="left:521px;top:806px;width:1px;height:17px;background:#808080"></div>
<div class="a" style="left:730px;top:806px;width:1px;height:17px;background:#808080"></div>

<!-- bottom line -->
<div class="a" style="left:0;top:858px;width:1600px;height:2px;background:#404040"></div>
<div class="t b" style="left:20px;top:3px;color:#fff;letter-spacing:0.413px">Interactive - Ocean-Florida (code: wKJigxKWvn)</div>
<div class="t" style="left:6px;top:22px;letter-spacing:-0.296px"><u>O</u>ptions</div>
<div class="t" style="left:55px;top:22px;transform:scaleX(0.893);transform-origin:0 0"><u>L</u>ogs</div>
<div class="t" style="left:89px;top:22px;transform:scaleX(0.902);transform-origin:0 0"><u>H</u>elp</div>
<div class="t b" style="left:8px;top:47px;font-size:13px;line-height:15px;height:15px;letter-spacing:0.757px">Interactive</div>
<div class="t" style="left:49.3px;top:70px;letter-spacing:-0.317px">New Booking</div>
<div class="t" style="left:49.3px;top:87px;letter-spacing:-0.315px">Completed Bookings</div>
<div class="t" style="left:49.3px;top:104px;letter-spacing:-0.273px">Quick Quotes</div>
<div class="t" style="left:49.3px;top:121px;letter-spacing:-0.104px">Administrator</div>
<div class="t" style="left:49.3px;top:138px;letter-spacing:-0.215px">Direct Clients</div>
<div class="t" style="left:49.3px;top:155px;letter-spacing:-0.092px">Reporting and Analytics</div>
<div class="t" style="left:49.3px;top:172px;letter-spacing:-0.208px">Viewdata</div>
<div class="t" style="left:49.3px;top:189px;letter-spacing:-0.238px">Maintenance</div>
<div class="t" style="left:28px;top:443px;color:#e4e4e4;letter-spacing:-0.186px">Booking contents</div>
<div class="t" style="left:31px;top:488px;transform:scaleX(0.914);transform-origin:0 0">Extras</div>
<div class="t" style="left:31px;top:504px;letter-spacing:-0.378px">Passengers</div>
<div class="t" style="left:31px;top:520px;letter-spacing:-0.256px">Payments</div>
<div class="t" style="left:31px;top:536px;letter-spacing:-0.151px">Refunds</div>
<div class="t" style="right:1397px;top:488px">0.00</div>
<div class="t" style="right:1397px;top:504px">0</div>
<div class="t" style="right:1397px;top:520px">0.00</div>
<div class="t" style="right:1397px;top:536px">0.00</div>
<div class="t b" style="left:12px;top:780px;letter-spacing:0.332px">Deposit</div>
<div class="t b" style="right:1399.5px;top:780px;letter-spacing:0.737px">0.00</div>
<div class="t b" style="left:12px;top:793px;letter-spacing:0.23px">Profit</div>
<div class="t b" style="right:1399.5px;top:793px;letter-spacing:0.737px">0.00</div>
<div class="t b" style="left:12px;top:806px;letter-spacing:0.674px">Total</div>
<div class="t b" style="right:1399.5px;top:806px;letter-spacing:0.737px">0.00</div>
<div class="t" style="left:236px;top:49px;color:#fff;letter-spacing:0.228px">Book. ref.: &lt;none&gt;</div>
<div class="t" style="left:380.5px;top:49px;letter-spacing:-0.211px">Direct Clients Search</div>
<div class="t" style="left:274.5px;top:76px;font-size:16px;line-height:20px;height:20px;color:#0a246a;-webkit-text-stroke:.3px #0a246a;letter-spacing:1.012px">Accommodation Search Results</div>
<div class="t" style="left:274.5px;top:96px;font-size:16px;line-height:20px;height:20px;color:#0a246a;-webkit-text-stroke:.3px #0a246a;letter-spacing:0.85px">For pax: 2A, 0C, 0I</div>
<div class="t b" style="left:217px;top:136px;letter-spacing:0.533px">Search results: 19/19</div>
<div class="t" style="left:223px;top:783px;letter-spacing:0.019px">First portion: 6.1 sec, total search time: 9.3 sec</div>
<div class="t" style="left:1238px;top:102px;color:#fff;transform:scaleX(0.938);transform-origin:0 0">More</div>
<div class="t" style="left:1237px;top:101px;color:#808080;transform:scaleX(0.938);transform-origin:0 0">More</div>
<div class="t" style="left:1273px;top:102px;color:#fff;letter-spacing:-0.326px">Stop</div>
<div class="t" style="left:1272px;top:101px;color:#808080;letter-spacing:-0.326px">Stop</div>
<div class="t" style="left:1305px;top:101px;letter-spacing:-0.26px">Facilities Filter</div>
<div class="t" style="left:1391px;top:101px;transform:scaleX(0.922);transform-origin:0 0">Basket</div>
<div class="t" style="left:1434px;top:101px;letter-spacing:-0.189px">Nett Price</div>
<div class="t" style="left:1500px;top:101px;letter-spacing:-0.123px">Navigate</div>
<div class="t" style="left:1554px;top:101px;transform:scaleX(0.907);transform-origin:0 0">Close</div>
<div class="t" style="left:219px;top:808px;transform:scaleX(0.924);transform-origin:0 0">Summary</div>
<div class="t" style="left:271px;top:808px;letter-spacing:-0.338px">Search</div>
<div class="t" style="left:311.5px;top:808px;letter-spacing:-0.394px">Flt 4A,4C MAN MCO MAN</div>
<div class="t" style="left:441px;top:808px;letter-spacing:-0.375px">Acc 4A,4C MCO</div>
<div class="t" style="left:524.5px;top:808px;transform:scaleX(0.926);transform-origin:0 0">Car MCO</div>
<div class="t" style="left:576px;top:808px;color:#fff;letter-spacing:-0.388px">Acc 2A TPA</div>
<div class="t" style="left:638.5px;top:808px;letter-spacing:-0.402px">Financial Summary</div>
<div class="t" style="left:806px;top:832px;letter-spacing:-0.182px">User: 446 - Clark Silk</div>
<div class="t" style="left:916.5px;top:832px;letter-spacing:-0.099px">Retailer: 'Ocean-Florida'</div>
<div class="t" style="left:1042.5px;top:832px;letter-spacing:-0.062px">Client: none</div>
<div class="t" style="right:9px;top:832px;letter-spacing:-0.357px">16:35 GMT</div>
<div class="hl" style="top:186px"></div>
<div class="hl" style="top:201px"></div>
<div class="hl" style="top:216px"></div>
<div class="hl" style="top:231px"></div>
<div class="hl" style="top:246px"></div>
<div class="hl" style="top:261px"></div>
<div class="hl" style="top:276px"></div>
<div class="hl" style="top:291px"></div>
<div class="hl" style="top:306px"></div>
<div class="hl" style="top:321px"></div>
<div class="hl" style="top:336px"></div>
<div class="hl" style="top:351px"></div>
<div class="hl" style="top:366px"></div>
<div class="hl" style="top:381px"></div>
<div class="hl" style="top:396px"></div>
<div class="hl" style="top:411px"></div>
<div class="hl" style="top:426px"></div>
<div class="hl" style="top:441px"></div>
<div class="hl" style="top:456px"></div>
<div class="th l" style="left:220px;width:75px"><span style="letter-spacing:-0.256px">Resort</span><svg class="flt" width="13" height="10" viewBox="0 0 13 10"><defs><linearGradient id="fg" x1="0" x2="1"><stop offset=".25" stop-color="#fff"/><stop offset="1" stop-color="#3c5c98"/></linearGradient></defs><path d="M.5 .5H12.5L7.5 5.5V9.5H5.5V5.5Z" fill="url(#fg)" stroke="#000" stroke-width="1"/></svg></div>
<div class="th l" style="left:295px;width:160px"><span style="letter-spacing:-0.35px">Accommodation</span></div>
<div class="th l" style="left:455px;width:40px"><span style="letter-spacing:0.272px">Rati...</span></div>
<div class="th l" style="left:495px;width:75px"><span style="letter-spacing:-0.302px">Board</span></div>
<div class="th l" style="left:570px;width:90px"><span style="letter-spacing:-0.171px">Room type</span></div>
<div class="th l" style="left:660px;width:35px"><span style="display:inline-block;transform:scaleX(0.911);transform-origin:0 0">DOW</span></div>
<div class="th l" style="left:695px;width:68px"><span style="letter-spacing:-0.19px">Check In</span></div>
<div class="th l" style="left:763px;width:35px"><span style="display:inline-block;transform:scaleX(0.911);transform-origin:0 0">DOW</span></div>
<div class="th l" style="left:798px;width:68px"><span style="letter-spacing:-0.32px">Check Out</span></div>
<div class="th l" style="left:866px;width:62px"><span style="letter-spacing:-0.381px">Supplier</span></div>
<div class="th c" style="left:928px;width:25px"><span style="display:inline-block;transform:scaleX(0.864);transform-origin:50% 0">Er</span></div>
<div class="th c" style="left:953px;width:25px"><span style="display:inline-block;transform:scaleX(0.897);transform-origin:50% 0">NR</span></div>
<div class="th c" style="left:978px;width:25px"><span style="display:inline-block;transform:scaleX(0.833);transform-origin:50% 0">MS</span></div>
<div class="th r" style="left:1003px;width:55px"><span style="display:inline-block;transform:scaleX(0.918);transform-origin:100% 0">Price</span></div>
<div class="th r" style="left:1058px;width:55px"><span style="letter-spacing:-0.245px">Incl.Fl.PP</span></div>
<div class="th r bk" style="left:1113px;width:65px"><span style="letter-spacing:-0.298px">Basket</span><i class="sortarr"></i></div>
<div class="th r" style="left:1178px;width:55px"><span style="letter-spacing:-0.24px">Discount</span></div>
<div class="th c" style="left:1233px;width:25px"><span style="letter-spacing:-0.25px">Of</span></div>
<div class="th l" style="left:1258px;width:60px"><span style="letter-spacing:0.023px">Contract</span></div>
<div class="th l" style="left:1318px;width:75px"><span style="letter-spacing:-0.19px">Act. Supplier</span></div>
<div class="th" style="left:1393px;width:195px;border-right:0;box-shadow:inset 0 -1px 0 #94918a"></div>
<div class="tr" style="top:172px">
<div class="td l" style="left:0px;width:75px"><span style="letter-spacing:0.022px">Gulf Coast ...</span></div>
<div class="td l" style="left:75px;width:160px"><span style="letter-spacing:-0.139px">Gulf Coast Homes Port Charlo...</span></div>
<div class="td l" style="left:235px;width:40px"><span style="display:inline-block;transform:scaleX(0.85);transform-origin:0 0">Villa</span></div>
<div class="td l" style="left:275px;width:75px"><span style="letter-spacing:-0.386px">Room Only</span></div>
<div class="td l" style="left:350px;width:90px"><span style="letter-spacing:-0.393px">2 Bedroom Villa</span></div>
<div class="td l" style="left:440px;width:35px"><span style="display:inline-block;transform:scaleX(0.894);transform-origin:0 0">Sun</span></div>
<div class="td l" style="left:475px;width:68px"><span style="letter-spacing:0.046px">26/06/2016</span></div>
<div class="td l" style="left:543px;width:35px"><span style="display:inline-block;transform:scaleX(0.894);transform-origin:0 0">Sun</span></div>
<div class="td l" style="left:578px;width:68px"><span style="letter-spacing:-0.007px">10/07/2016</span></div>
<div class="td l" style="left:646px;width:62px"><span style="letter-spacing:-0.025px">Ocean B...</span></div>
<div class="td c" style="left:708px;width:25px"><span class="ast">*</span></div>
<div class="td c" style="left:733px;width:25px"></div>
<div class="td c" style="left:758px;width:25px"></div>
<div class="td r" style="left:783px;width:55px">819.26</div>
<div class="td r" style="left:838px;width:55px">409.63</div>
<div class="td r" style="left:893px;width:65px">819.26</div>
<div class="td r" style="left:958px;width:55px">0.00</div>
<div class="td c" style="left:1013px;width:25px"></div>
<div class="td l" style="left:1038px;width:60px"><span style="display:inline-block;transform:scaleX(0.818);transform-origin:0 0">XML</span></div>
<div class="td l" style="left:1098px;width:75px"></div>
</div>
<div class="tr" style="top:187px">
<div class="td l" style="left:0px;width:75px"><span style="letter-spacing:0.022px">Gulf Coast ...</span></div>
<div class="td l" style="left:75px;width:160px"><span style="letter-spacing:-0.139px">Gulf Coast Homes Port Charlo...</span></div>
<div class="td l" style="left:235px;width:40px"><span style="display:inline-block;transform:scaleX(0.85);transform-origin:0 0">Villa</span></div>
<div class="td l" style="left:275px;width:75px"><span style="letter-spacing:-0.386px">Room Only</span></div>
<div class="td l" style="left:350px;width:90px"><span style="letter-spacing:-0.051px">3 Bedroom Sta...</span></div>
<div class="td l" style="left:440px;width:35px"><span style="display:inline-block;transform:scaleX(0.894);transform-origin:0 0">Sun</span></div>
<div class="td l" style="left:475px;width:68px"><span style="letter-spacing:0.046px">26/06/2016</span></div>
<div class="td l" style="left:543px;width:35px"><span style="display:inline-block;transform:scaleX(0.894);transform-origin:0 0">Sun</span></div>
<div class="td l" style="left:578px;width:68px"><span style="letter-spacing:-0.007px">10/07/2016</span></div>
<div class="td l" style="left:646px;width:62px"><span style="letter-spacing:-0.025px">Ocean B...</span></div>
<div class="td c" style="left:708px;width:25px"><span class="ast">*</span></div>
<div class="td c" style="left:733px;width:25px"></div>
<div class="td c" style="left:758px;width:25px"></div>
<div class="td r" style="left:783px;width:55px">881.48</div>
<div class="td r" style="left:838px;width:55px">440.74</div>
<div class="td r" style="left:893px;width:65px">881.48</div>
<div class="td r" style="left:958px;width:55px">0.00</div>
<div class="td c" style="left:1013px;width:25px"></div>
<div class="td l" style="left:1038px;width:60px"><span style="display:inline-block;transform:scaleX(0.818);transform-origin:0 0">XML</span></div>
<div class="td l" style="left:1098px;width:75px"></div>
</div>
<div class="tr" style="top:202px">
<div class="td l" style="left:0px;width:75px"><span style="letter-spacing:0.022px">Gulf Coast ...</span></div>
<div class="td l" style="left:75px;width:160px"><span style="letter-spacing:-0.139px">Gulf Coast Homes Port Charlo...</span></div>
<div class="td l" style="left:235px;width:40px"><span style="display:inline-block;transform:scaleX(0.85);transform-origin:0 0">Villa</span></div>
<div class="td l" style="left:275px;width:75px"><span style="letter-spacing:-0.386px">Room Only</span></div>
<div class="td l" style="left:350px;width:90px"><span style="letter-spacing:-0.171px">3 Bedroom Pre...</span></div>
<div class="td l" style="left:440px;width:35px"><span style="display:inline-block;transform:scaleX(0.894);transform-origin:0 0">Sun</span></div>
<div class="td l" style="left:475px;width:68px"><span style="letter-spacing:0.046px">26/06/2016</span></div>
<div class="td l" style="left:543px;width:35px"><span style="display:inline-block;transform:scaleX(0.894);transform-origin:0 0">Sun</span></div>
<div class="td l" style="left:578px;width:68px"><span style="letter-spacing:-0.007px">10/07/2016</span></div>
<div class="td l" style="left:646px;width:62px"><span style="letter-spacing:-0.025px">Ocean B...</span></div>
<div class="td c" style="left:708px;width:25px"><span class="ast">*</span></div>
<div class="td c" style="left:733px;width:25px"></div>
<div class="td c" style="left:758px;width:25px"></div>
<div class="td r" style="left:783px;width:55px">995.56</div>
<div class="td r" style="left:838px;width:55px">497.78</div>
<div class="td r" style="left:893px;width:65px">995.56</div>
<div class="td r" style="left:958px;width:55px">0.00</div>
<div class="td c" style="left:1013px;width:25px"></div>
<div class="td l" style="left:1038px;width:60px"><span style="display:inline-block;transform:scaleX(0.818);transform-origin:0 0">XML</span></div>
<div class="td l" style="left:1098px;width:75px"></div>
</div>
<div class="tr" style="top:217px">
<div class="td l" style="left:0px;width:75px"><span style="letter-spacing:0.022px">Gulf Coast ...</span></div>
<div class="td l" style="left:75px;width:160px"><span style="letter-spacing:-0.155px">Gulf Coast Homes New Port R...</span></div>
<div class="td l" style="left:235px;width:40px"><span style="display:inline-block;transform:scaleX(0.85);transform-origin:0 0">Villa</span></div>
<div class="td l" style="left:275px;width:75px"><span style="letter-spacing:-0.386px">Room Only</span></div>
<div class="td l" style="left:350px;width:90px"><span style="letter-spacing:-0.132px">3 Bedroom Del...</span></div>
<div class="td l" style="left:440px;width:35px"><span style="display:inline-block;transform:scaleX(0.894);transform-origin:0 0">Sun</span></div>
<div class="td l" style="left:475px;width:68px"><span style="letter-spacing:0.046px">26/06/2016</span></div>
<div class="td l" style="left:543px;width:35px"><span style="display:inline-block;transform:scaleX(0.894);transform-origin:0 0">Sun</span></div>
<div class="td l" style="left:578px;width:68px"><span style="letter-spacing:-0.007px">10/07/2016</span></div>
<div class="td l" style="left:646px;width:62px"><span style="letter-spacing:-0.025px">Ocean B...</span></div>
<div class="td c" style="left:708px;width:25px"></div>
<div class="td c" style="left:733px;width:25px"></div>
<div class="td c" style="left:758px;width:25px"></div>
<div class="td r" style="left:783px;width:55px">1,488.89</div>
<div class="td r" style="left:838px;width:55px">744.45</div>
<div class="td r" style="left:893px;width:65px">1,488.89</div>
<div class="td r" style="left:958px;width:55px">0.00</div>
<div class="td c" style="left:1013px;width:25px"></div>
<div class="td l" style="left:1038px;width:60px"><span style="display:inline-block;transform:scaleX(0.818);transform-origin:0 0">XML</span></div>
<div class="td l" style="left:1098px;width:75px"></div>
</div>
<div class="tr" style="top:232px">
<div class="td l" style="left:0px;width:75px"><span style="letter-spacing:0.022px">Gulf Coast ...</span></div>
<div class="td l" style="left:75px;width:160px"><span style="letter-spacing:-0.155px">Gulf Coast Homes New Port R...</span></div>
<div class="td l" style="left:235px;width:40px"><span style="display:inline-block;transform:scaleX(0.85);transform-origin:0 0">Villa</span></div>
<div class="td l" style="left:275px;width:75px"><span style="letter-spacing:-0.386px">Room Only</span></div>
<div class="td l" style="left:350px;width:90px"><span style="letter-spacing:-0.132px">4 Bedroom Del...</span></div>
<div class="td l" style="left:440px;width:35px"><span style="display:inline-block;transform:scaleX(0.894);transform-origin:0 0">Sun</span></div>
<div class="td l" style="left:475px;width:68px"><span style="letter-spacing:0.046px">26/06/2016</span></div>
<div class="td l" style="left:543px;width:35px"><span style="display:inline-block;transform:scaleX(0.894);transform-origin:0 0">Sun</span></div>
<div class="td l" style="left:578px;width:68px"><span style="letter-spacing:-0.007px">10/07/2016</span></div>
<div class="td l" style="left:646px;width:62px"><span style="letter-spacing:-0.025px">Ocean B...</span></div>
<div class="td c" style="left:708px;width:25px"></div>
<div class="td c" style="left:733px;width:25px"></div>
<div class="td c" style="left:758px;width:25px"></div>
<div class="td r" style="left:783px;width:55px">1,677.78</div>
<div class="td r" style="left:838px;width:55px">838.89</div>
<div class="td r" style="left:893px;width:65px">1,677.78</div>
<div class="td r" style="left:958px;width:55px">0.00</div>
<div class="td c" style="left:1013px;width:25px"></div>
<div class="td l" style="left:1038px;width:60px"><span style="display:inline-block;transform:scaleX(0.818);transform-origin:0 0">XML</span></div>
<div class="td l" style="left:1098px;width:75px"></div>
</div>
<div class="tr sel" style="top:247px">
<div class="td l" style="left:0px;width:75px"><span style="letter-spacing:0.022px">Gulf Coast ...</span></div>
<div class="td l" style="left:75px;width:160px"><span style="letter-spacing:-0.099px">Gulf Coast Homes Fort Myers...</span></div>
<div class="td l" style="left:235px;width:40px"><span style="display:inline-block;transform:scaleX(0.85);transform-origin:0 0">Villa</span></div>
<div class="td l" style="left:275px;width:75px"><span style="letter-spacing:-0.386px">Room Only</span></div>
<div class="td l" style="left:350px;width:90px"><span style="letter-spacing:-0.132px">3 Bedroom Del...</span></div>
<div class="td l" style="left:440px;width:35px"><span style="display:inline-block;transform:scaleX(0.894);transform-origin:0 0">Sun</span></div>
<div class="td l" style="left:475px;width:68px"><span style="letter-spacing:0.046px">26/06/2016</span></div>
<div class="td l" style="left:543px;width:35px"><span style="display:inline-block;transform:scaleX(0.894);transform-origin:0 0">Sun</span></div>
<div class="td l" style="left:578px;width:68px"><span style="letter-spacing:-0.007px">10/07/2016</span></div>
<div class="td l" style="left:646px;width:62px"><span style="letter-spacing:-0.025px">Ocean B...</span></div>
<div class="td c" style="left:708px;width:25px"></div>
<div class="td c" style="left:733px;width:25px"></div>
<div class="td c" style="left:758px;width:25px"></div>
<div class="td r" style="left:783px;width:55px">1,708.89</div>
<div class="td r" style="left:838px;width:55px">854.45</div>
<div class="td r" style="left:893px;width:65px">1,708.89</div>
<div class="td r" style="left:958px;width:55px">0.00</div>
<div class="td c" style="left:1013px;width:25px"></div>
<div class="td l" style="left:1038px;width:60px"><span style="display:inline-block;transform:scaleX(0.818);transform-origin:0 0">XML</span></div>
<div class="td l" style="left:1098px;width:75px"></div>
</div>
<div class="tr" style="top:262px">
<div class="td l" style="left:0px;width:75px"><span style="letter-spacing:0.022px">Gulf Coast ...</span></div>
<div class="td l" style="left:75px;width:160px"><span style="letter-spacing:-0.077px">Gulf Coast Homes Charlotte ...</span></div>
<div class="td l" style="left:235px;width:40px"><span style="display:inline-block;transform:scaleX(0.85);transform-origin:0 0">Villa</span></div>
<div class="td l" style="left:275px;width:75px"><span style="letter-spacing:-0.386px">Room Only</span></div>
<div class="td l" style="left:350px;width:90px"><span style="letter-spacing:-0.393px">2 Bedroom Villa</span></div>
<div class="td l" style="left:440px;width:35px"><span style="display:inline-block;transform:scaleX(0.894);transform-origin:0 0">Sun</span></div>
<div class="td l" style="left:475px;width:68px"><span style="letter-spacing:0.046px">26/06/2016</span></div>
<div class="td l" style="left:543px;width:35px"><span style="display:inline-block;transform:scaleX(0.894);transform-origin:0 0">Sun</span></div>
<div class="td l" style="left:578px;width:68px"><span style="letter-spacing:-0.007px">10/07/2016</span></div>
<div class="td l" style="left:646px;width:62px"><span style="letter-spacing:-0.025px">Ocean B...</span></div>
<div class="td c" style="left:708px;width:25px"></div>
<div class="td c" style="left:733px;width:25px"></div>
<div class="td c" style="left:758px;width:25px"></div>
<div class="td r" style="left:783px;width:55px">1,764.44</div>
<div class="td r" style="left:838px;width:55px">882.22</div>
<div class="td r" style="left:893px;width:65px">1,764.44</div>
<div class="td r" style="left:958px;width:55px">0.00</div>
<div class="td c" style="left:1013px;width:25px"></div>
<div class="td l" style="left:1038px;width:60px"><span style="display:inline-block;transform:scaleX(0.818);transform-origin:0 0">XML</span></div>
<div class="td l" style="left:1098px;width:75px"></div>
</div>
<div class="tr" style="top:277px">
<div class="td l" style="left:0px;width:75px"><span style="letter-spacing:0.022px">Gulf Coast ...</span></div>
<div class="td l" style="left:75px;width:160px"><span style="letter-spacing:-0.099px">Gulf Coast Homes Fort Myers...</span></div>
<div class="td l" style="left:235px;width:40px"><span style="display:inline-block;transform:scaleX(0.85);transform-origin:0 0">Villa</span></div>
<div class="td l" style="left:275px;width:75px"><span style="letter-spacing:-0.386px">Room Only</span></div>
<div class="td l" style="left:350px;width:90px"><span style="letter-spacing:-0.113px">3 Bedroom Exe...</span></div>
<div class="td l" style="left:440px;width:35px"><span style="display:inline-block;transform:scaleX(0.894);transform-origin:0 0">Sun</span></div>
<div class="td l" style="left:475px;width:68px"><span style="letter-spacing:0.046px">26/06/2016</span></div>
<div class="td l" style="left:543px;width:35px"><span style="display:inline-block;transform:scaleX(0.894);transform-origin:0 0">Sun</span></div>
<div class="td l" style="left:578px;width:68px"><span style="letter-spacing:-0.007px">10/07/2016</span></div>
<div class="td l" style="left:646px;width:62px"><span style="letter-spacing:-0.025px">Ocean B...</span></div>
<div class="td c" style="left:708px;width:25px"></div>
<div class="td c" style="left:733px;width:25px"></div>
<div class="td c" style="left:758px;width:25px"></div>
<div class="td r" style="left:783px;width:55px">1,815.56</div>
<div class="td r" style="left:838px;width:55px">907.78</div>
<div class="td r" style="left:893px;width:65px">1,815.56</div>
<div class="td r" style="left:958px;width:55px">0.00</div>
<div class="td c" style="left:1013px;width:25px"></div>
<div class="td l" style="left:1038px;width:60px"><span style="display:inline-block;transform:scaleX(0.818);transform-origin:0 0">XML</span></div>
<div class="td l" style="left:1098px;width:75px"></div>
</div>
<div class="tr" style="top:292px">
<div class="td l" style="left:0px;width:75px"><span style="letter-spacing:0.022px">Gulf Coast ...</span></div>
<div class="td l" style="left:75px;width:160px"><span style="letter-spacing:-0.099px">Gulf Coast Homes Fort Myers...</span></div>
<div class="td l" style="left:235px;width:40px"><span style="display:inline-block;transform:scaleX(0.85);transform-origin:0 0">Villa</span></div>
<div class="td l" style="left:275px;width:75px"><span style="letter-spacing:-0.386px">Room Only</span></div>
<div class="td l" style="left:350px;width:90px"><span style="letter-spacing:-0.132px">4 Bedroom Del...</span></div>
<div class="td l" style="left:440px;width:35px"><span style="display:inline-block;transform:scaleX(0.894);transform-origin:0 0">Sun</span></div>
<div class="td l" style="left:475px;width:68px"><span style="letter-spacing:0.046px">26/06/2016</span></div>
<div class="td l" style="left:543px;width:35px"><span style="display:inline-block;transform:scaleX(0.894);transform-origin:0 0">Sun</span></div>
<div class="td l" style="left:578px;width:68px"><span style="letter-spacing:-0.007px">10/07/2016</span></div>
<div class="td l" style="left:646px;width:62px"><span style="letter-spacing:-0.025px">Ocean B...</span></div>
<div class="td c" style="left:708px;width:25px"></div>
<div class="td c" style="left:733px;width:25px"></div>
<div class="td c" style="left:758px;width:25px"></div>
<div class="td r" style="left:783px;width:55px">1,885.93</div>
<div class="td r" style="left:838px;width:55px">942.97</div>
<div class="td r" style="left:893px;width:65px">1,885.93</div>
<div class="td r" style="left:958px;width:55px">0.00</div>
<div class="td c" style="left:1013px;width:25px"></div>
<div class="td l" style="left:1038px;width:60px"><span style="display:inline-block;transform:scaleX(0.818);transform-origin:0 0">XML</span></div>
<div class="td l" style="left:1098px;width:75px"></div>
</div>
<div class="tr" style="top:307px">
<div class="td l" style="left:0px;width:75px"><span style="letter-spacing:0.022px">Gulf Coast ...</span></div>
<div class="td l" style="left:75px;width:160px"><span style="letter-spacing:-0.077px">Gulf Coast Homes Charlotte ...</span></div>
<div class="td l" style="left:235px;width:40px"><span style="display:inline-block;transform:scaleX(0.85);transform-origin:0 0">Villa</span></div>
<div class="td l" style="left:275px;width:75px"><span style="letter-spacing:-0.386px">Room Only</span></div>
<div class="td l" style="left:350px;width:90px"><span style="letter-spacing:-0.393px">3 Bedroom Villa</span></div>
<div class="td l" style="left:440px;width:35px"><span style="display:inline-block;transform:scaleX(0.894);transform-origin:0 0">Sun</span></div>
<div class="td l" style="left:475px;width:68px"><span style="letter-spacing:0.046px">26/06/2016</span></div>
<div class="td l" style="left:543px;width:35px"><span style="display:inline-block;transform:scaleX(0.894);transform-origin:0 0">Sun</span></div>
<div class="td l" style="left:578px;width:68px"><span style="letter-spacing:-0.007px">10/07/2016</span></div>
<div class="td l" style="left:646px;width:62px"><span style="letter-spacing:-0.025px">Ocean B...</span></div>
<div class="td c" style="left:708px;width:25px"></div>
<div class="td c" style="left:733px;width:25px"></div>
<div class="td c" style="left:758px;width:25px"></div>
<div class="td r" style="left:783px;width:55px">1,899.26</div>
<div class="td r" style="left:838px;width:55px">949.63</div>
<div class="td r" style="left:893px;width:65px">1,899.26</div>
<div class="td r" style="left:958px;width:55px">0.00</div>
<div class="td c" style="left:1013px;width:25px"></div>
<div class="td l" style="left:1038px;width:60px"><span style="display:inline-block;transform:scaleX(0.818);transform-origin:0 0">XML</span></div>
<div class="td l" style="left:1098px;width:75px"></div>
</div>
<div class="tr" style="top:322px">
<div class="td l" style="left:0px;width:75px"><span style="letter-spacing:0.022px">Gulf Coast ...</span></div>
<div class="td l" style="left:75px;width:160px"><span style="letter-spacing:-0.099px">Gulf Coast Homes Fort Myers...</span></div>
<div class="td l" style="left:235px;width:40px"><span style="display:inline-block;transform:scaleX(0.85);transform-origin:0 0">Villa</span></div>
<div class="td l" style="left:275px;width:75px"><span style="letter-spacing:-0.386px">Room Only</span></div>
<div class="td l" style="left:350px;width:90px"><span style="letter-spacing:-0.113px">4 Bedroom Exe...</span></div>
<div class="td l" style="left:440px;width:35px"><span style="display:inline-block;transform:scaleX(0.894);transform-origin:0 0">Sun</span></div>
<div class="td l" style="left:475px;width:68px"><span style="letter-spacing:0.046px">26/06/2016</span></div>
<div class="td l" style="left:543px;width:35px"><span style="display:inline-block;transform:scaleX(0.894);transform-origin:0 0">Sun</span></div>
<div class="td l" style="left:578px;width:68px"><span style="letter-spacing:-0.007px">10/07/2016</span></div>
<div class="td l" style="left:646px;width:62px"><span style="letter-spacing:-0.025px">Ocean B...</span></div>
<div class="td c" style="left:708px;width:25px"></div>
<div class="td c" style="left:733px;width:25px"></div>
<div class="td c" style="left:758px;width:25px"></div>
<div class="td r" style="left:783px;width:55px">1,992.59</div>
<div class="td r" style="left:838px;width:55px">996.30</div>
<div class="td r" style="left:893px;width:65px">1,992.59</div>
<div class="td r" style="left:958px;width:55px">0.00</div>
<div class="td c" style="left:1013px;width:25px"></div>
<div class="td l" style="left:1038px;width:60px"><span style="display:inline-block;transform:scaleX(0.818);transform-origin:0 0">XML</span></div>
<div class="td l" style="left:1098px;width:75px"></div>
</div>
<div class="tr" style="top:337px">
<div class="td l" style="left:0px;width:75px"><span style="letter-spacing:0.022px">Gulf Coast ...</span></div>
<div class="td l" style="left:75px;width:160px"><span style="letter-spacing:-0.259px">Gulf Coast Homes Naples Area</span></div>
<div class="td l" style="left:235px;width:40px"><span style="display:inline-block;transform:scaleX(0.85);transform-origin:0 0">Villa</span></div>
<div class="td l" style="left:275px;width:75px"><span style="letter-spacing:-0.386px">Room Only</span></div>
<div class="td l" style="left:350px;width:90px"><span style="letter-spacing:-0.113px">3 Bedroom Exe...</span></div>
<div class="td l" style="left:440px;width:35px"><span style="display:inline-block;transform:scaleX(0.894);transform-origin:0 0">Sun</span></div>
<div class="td l" style="left:475px;width:68px"><span style="letter-spacing:0.046px">26/06/2016</span></div>
<div class="td l" style="left:543px;width:35px"><span style="display:inline-block;transform:scaleX(0.894);transform-origin:0 0">Sun</span></div>
<div class="td l" style="left:578px;width:68px"><span style="letter-spacing:-0.007px">10/07/2016</span></div>
<div class="td l" style="left:646px;width:62px"><span style="letter-spacing:-0.025px">Ocean B...</span></div>
<div class="td c" style="left:708px;width:25px"></div>
<div class="td c" style="left:733px;width:25px"></div>
<div class="td c" style="left:758px;width:25px"></div>
<div class="td r" style="left:783px;width:55px">2,046.67</div>
<div class="td r" style="left:838px;width:55px">1,023.34</div>
<div class="td r" style="left:893px;width:65px">2,046.67</div>
<div class="td r" style="left:958px;width:55px">0.00</div>
<div class="td c" style="left:1013px;width:25px"></div>
<div class="td l" style="left:1038px;width:60px"><span style="display:inline-block;transform:scaleX(0.818);transform-origin:0 0">XML</span></div>
<div class="td l" style="left:1098px;width:75px"></div>
</div>
<div class="tr" style="top:352px">
<div class="td l" style="left:0px;width:75px"><span style="letter-spacing:0.022px">Gulf Coast ...</span></div>
<div class="td l" style="left:75px;width:160px"><span style="letter-spacing:-0.168px">Gulf Coast Homes Englewood...</span></div>
<div class="td l" style="left:235px;width:40px"><span style="display:inline-block;transform:scaleX(0.85);transform-origin:0 0">Villa</span></div>
<div class="td l" style="left:275px;width:75px"><span style="letter-spacing:-0.386px">Room Only</span></div>
<div class="td l" style="left:350px;width:90px"><span style="letter-spacing:-0.393px">3 Bedroom Villa</span></div>
<div class="td l" style="left:440px;width:35px"><span style="display:inline-block;transform:scaleX(0.894);transform-origin:0 0">Sun</span></div>
<div class="td l" style="left:475px;width:68px"><span style="letter-spacing:0.046px">26/06/2016</span></div>
<div class="td l" style="left:543px;width:35px"><span style="display:inline-block;transform:scaleX(0.894);transform-origin:0 0">Sun</span></div>
<div class="td l" style="left:578px;width:68px"><span style="letter-spacing:-0.007px">10/07/2016</span></div>
<div class="td l" style="left:646px;width:62px"><span style="letter-spacing:-0.025px">Ocean B...</span></div>
<div class="td c" style="left:708px;width:25px"></div>
<div class="td c" style="left:733px;width:25px"></div>
<div class="td c" style="left:758px;width:25px"></div>
<div class="td r" style="left:783px;width:55px">2,267.41</div>
<div class="td r" style="left:838px;width:55px">1,133.71</div>
<div class="td r" style="left:893px;width:65px">2,267.41</div>
<div class="td r" style="left:958px;width:55px">0.00</div>
<div class="td c" style="left:1013px;width:25px"></div>
<div class="td l" style="left:1038px;width:60px"><span style="display:inline-block;transform:scaleX(0.818);transform-origin:0 0">XML</span></div>
<div class="td l" style="left:1098px;width:75px"></div>
</div>
<div class="tr" style="top:367px">
<div class="td l" style="left:0px;width:75px"><span style="letter-spacing:0.022px">Gulf Coast ...</span></div>
<div class="td l" style="left:75px;width:160px"><span style="letter-spacing:-0.259px">Gulf Coast Homes Naples Area</span></div>
<div class="td l" style="left:235px;width:40px"><span style="display:inline-block;transform:scaleX(0.85);transform-origin:0 0">Villa</span></div>
<div class="td l" style="left:275px;width:75px"><span style="letter-spacing:-0.386px">Room Only</span></div>
<div class="td l" style="left:350px;width:90px"><span style="letter-spacing:-0.113px">4 Bedroom Exe...</span></div>
<div class="td l" style="left:440px;width:35px"><span style="display:inline-block;transform:scaleX(0.894);transform-origin:0 0">Sun</span></div>
<div class="td l" style="left:475px;width:68px"><span style="letter-spacing:0.046px">26/06/2016</span></div>
<div class="td l" style="left:543px;width:35px"><span style="display:inline-block;transform:scaleX(0.894);transform-origin:0 0">Sun</span></div>
<div class="td l" style="left:578px;width:68px"><span style="letter-spacing:-0.007px">10/07/2016</span></div>
<div class="td l" style="left:646px;width:62px"><span style="letter-spacing:-0.025px">Ocean B...</span></div>
<div class="td c" style="left:708px;width:25px"></div>
<div class="td c" style="left:733px;width:25px"></div>
<div class="td c" style="left:758px;width:25px"></div>
<div class="td r" style="left:783px;width:55px">2,285.19</div>
<div class="td r" style="left:838px;width:55px">1,142.60</div>
<div class="td r" style="left:893px;width:65px">2,285.19</div>
<div class="td r" style="left:958px;width:55px">0.00</div>
<div class="td c" style="left:1013px;width:25px"></div>
<div class="td l" style="left:1038px;width:60px"><span style="display:inline-block;transform:scaleX(0.818);transform-origin:0 0">XML</span></div>
<div class="td l" style="left:1098px;width:75px"></div>
</div>
<div class="tr" style="top:382px">
<div class="td l" style="left:0px;width:75px"><span style="letter-spacing:0.022px">Gulf Coast ...</span></div>
<div class="td l" style="left:75px;width:160px"><span style="letter-spacing:-0.168px">Gulf Coast Homes Englewood...</span></div>
<div class="td l" style="left:235px;width:40px"><span style="display:inline-block;transform:scaleX(0.85);transform-origin:0 0">Villa</span></div>
<div class="td l" style="left:275px;width:75px"><span style="letter-spacing:-0.386px">Room Only</span></div>
<div class="td l" style="left:350px;width:90px"><span style="letter-spacing:-0.393px">4 Bedroom Villa</span></div>
<div class="td l" style="left:440px;width:35px"><span style="display:inline-block;transform:scaleX(0.894);transform-origin:0 0">Sun</span></div>
<div class="td l" style="left:475px;width:68px"><span style="letter-spacing:0.046px">26/06/2016</span></div>
<div class="td l" style="left:543px;width:35px"><span style="display:inline-block;transform:scaleX(0.894);transform-origin:0 0">Sun</span></div>
<div class="td l" style="left:578px;width:68px"><span style="letter-spacing:-0.007px">10/07/2016</span></div>
<div class="td l" style="left:646px;width:62px"><span style="letter-spacing:-0.025px">Ocean B...</span></div>
<div class="td c" style="left:708px;width:25px"></div>
<div class="td c" style="left:733px;width:25px"></div>
<div class="td c" style="left:758px;width:25px"></div>
<div class="td r" style="left:783px;width:55px">2,457.78</div>
<div class="td r" style="left:838px;width:55px">1,228.89</div>
<div class="td r" style="left:893px;width:65px">2,457.78</div>
<div class="td r" style="left:958px;width:55px">0.00</div>
<div class="td c" style="left:1013px;width:25px"></div>
<div class="td l" style="left:1038px;width:60px"><span style="display:inline-block;transform:scaleX(0.818);transform-origin:0 0">XML</span></div>
<div class="td l" style="left:1098px;width:75px"></div>
</div>
<div class="tr" style="top:397px">
<div class="td l" style="left:0px;width:75px"><span style="letter-spacing:0.022px">Gulf Coast ...</span></div>
<div class="td l" style="left:75px;width:160px"><span style="letter-spacing:-0.259px">Gulf Coast Homes Naples Area</span></div>
<div class="td l" style="left:235px;width:40px"><span style="display:inline-block;transform:scaleX(0.85);transform-origin:0 0">Villa</span></div>
<div class="td l" style="left:275px;width:75px"><span style="letter-spacing:-0.386px">Room Only</span></div>
<div class="td l" style="left:350px;width:90px"><span style="letter-spacing:-0.106px">3 Bedroom Plat...</span></div>
<div class="td l" style="left:440px;width:35px"><span style="display:inline-block;transform:scaleX(0.894);transform-origin:0 0">Sun</span></div>
<div class="td l" style="left:475px;width:68px"><span style="letter-spacing:0.046px">26/06/2016</span></div>
<div class="td l" style="left:543px;width:35px"><span style="display:inline-block;transform:scaleX(0.894);transform-origin:0 0">Sun</span></div>
<div class="td l" style="left:578px;width:68px"><span style="letter-spacing:-0.007px">10/07/2016</span></div>
<div class="td l" style="left:646px;width:62px"><span style="letter-spacing:-0.025px">Ocean B...</span></div>
<div class="td c" style="left:708px;width:25px"></div>
<div class="td c" style="left:733px;width:25px"></div>
<div class="td c" style="left:758px;width:25px"></div>
<div class="td r" style="left:783px;width:55px">2,663.70</div>
<div class="td r" style="left:838px;width:55px">1,331.85</div>
<div class="td r" style="left:893px;width:65px">2,663.70</div>
<div class="td r" style="left:958px;width:55px">0.00</div>
<div class="td c" style="left:1013px;width:25px"></div>
<div class="td l" style="left:1038px;width:60px"><span style="display:inline-block;transform:scaleX(0.818);transform-origin:0 0">XML</span></div>
<div class="td l" style="left:1098px;width:75px"></div>
</div>
<div class="tr" style="top:412px">
<div class="td l" style="left:0px;width:75px"><span style="letter-spacing:0.022px">Gulf Coast ...</span></div>
<div class="td l" style="left:75px;width:160px"><span style="letter-spacing:-0.242px">Gulf Coast Homes Marco Island</span></div>
<div class="td l" style="left:235px;width:40px"><span style="display:inline-block;transform:scaleX(0.85);transform-origin:0 0">Villa</span></div>
<div class="td l" style="left:275px;width:75px"><span style="letter-spacing:-0.386px">Room Only</span></div>
<div class="td l" style="left:350px;width:90px"><span style="letter-spacing:-0.393px">3 Bedroom Villa</span></div>
<div class="td l" style="left:440px;width:35px"><span style="display:inline-block;transform:scaleX(0.894);transform-origin:0 0">Sun</span></div>
<div class="td l" style="left:475px;width:68px"><span style="letter-spacing:0.046px">26/06/2016</span></div>
<div class="td l" style="left:543px;width:35px"><span style="display:inline-block;transform:scaleX(0.894);transform-origin:0 0">Sun</span></div>
<div class="td l" style="left:578px;width:68px"><span style="letter-spacing:-0.007px">10/07/2016</span></div>
<div class="td l" style="left:646px;width:62px"><span style="letter-spacing:-0.025px">Ocean B...</span></div>
<div class="td c" style="left:708px;width:25px"></div>
<div class="td c" style="left:733px;width:25px"></div>
<div class="td c" style="left:758px;width:25px"></div>
<div class="td r" style="left:783px;width:55px">2,670.37</div>
<div class="td r" style="left:838px;width:55px">1,335.19</div>
<div class="td r" style="left:893px;width:65px">2,670.37</div>
<div class="td r" style="left:958px;width:55px">0.00</div>
<div class="td c" style="left:1013px;width:25px"></div>
<div class="td l" style="left:1038px;width:60px"><span style="display:inline-block;transform:scaleX(0.818);transform-origin:0 0">XML</span></div>
<div class="td l" style="left:1098px;width:75px"></div>
</div>
<div class="tr" style="top:427px">
<div class="td l" style="left:0px;width:75px"><span style="letter-spacing:0.022px">Gulf Coast ...</span></div>
<div class="td l" style="left:75px;width:160px"><span style="letter-spacing:-0.259px">Gulf Coast Homes Naples Area</span></div>
<div class="td l" style="left:235px;width:40px"><span style="display:inline-block;transform:scaleX(0.85);transform-origin:0 0">Villa</span></div>
<div class="td l" style="left:275px;width:75px"><span style="letter-spacing:-0.386px">Room Only</span></div>
<div class="td l" style="left:350px;width:90px"><span style="letter-spacing:-0.106px">4 Bedroom Plat...</span></div>
<div class="td l" style="left:440px;width:35px"><span style="display:inline-block;transform:scaleX(0.894);transform-origin:0 0">Sun</span></div>
<div class="td l" style="left:475px;width:68px"><span style="letter-spacing:0.046px">26/06/2016</span></div>
<div class="td l" style="left:543px;width:35px"><span style="display:inline-block;transform:scaleX(0.894);transform-origin:0 0">Sun</span></div>
<div class="td l" style="left:578px;width:68px"><span style="letter-spacing:-0.007px">10/07/2016</span></div>
<div class="td l" style="left:646px;width:62px"><span style="letter-spacing:-0.025px">Ocean B...</span></div>
<div class="td c" style="left:708px;width:25px"></div>
<div class="td c" style="left:733px;width:25px"></div>
<div class="td c" style="left:758px;width:25px"></div>
<div class="td r" style="left:783px;width:55px">2,908.89</div>
<div class="td r" style="left:838px;width:55px">1,454.45</div>
<div class="td r" style="left:893px;width:65px">2,908.89</div>
<div class="td r" style="left:958px;width:55px">0.00</div>
<div class="td c" style="left:1013px;width:25px"></div>
<div class="td l" style="left:1038px;width:60px"><span style="display:inline-block;transform:scaleX(0.818);transform-origin:0 0">XML</span></div>
<div class="td l" style="left:1098px;width:75px"></div>
</div>
<div class="tr" style="top:442px">
<div class="td l" style="left:0px;width:75px"><span style="letter-spacing:0.022px">Gulf Coast ...</span></div>
<div class="td l" style="left:75px;width:160px"><span style="letter-spacing:-0.242px">Gulf Coast Homes Marco Island</span></div>
<div class="td l" style="left:235px;width:40px"><span style="display:inline-block;transform:scaleX(0.85);transform-origin:0 0">Villa</span></div>
<div class="td l" style="left:275px;width:75px"><span style="letter-spacing:-0.386px">Room Only</span></div>
<div class="td l" style="left:350px;width:90px"><span style="letter-spacing:-0.393px">4 Bedroom Villa</span></div>
<div class="td l" style="left:440px;width:35px"><span style="display:inline-block;transform:scaleX(0.894);transform-origin:0 0">Sun</span></div>
<div class="td l" style="left:475px;width:68px"><span style="letter-spacing:0.046px">26/06/2016</span></div>
<div class="td l" style="left:543px;width:35px"><span style="display:inline-block;transform:scaleX(0.894);transform-origin:0 0">Sun</span></div>
<div class="td l" style="left:578px;width:68px"><span style="letter-spacing:-0.007px">10/07/2016</span></div>
<div class="td l" style="left:646px;width:62px"><span style="letter-spacing:-0.025px">Ocean B...</span></div>
<div class="td c" style="left:708px;width:25px"></div>
<div class="td c" style="left:733px;width:25px"></div>
<div class="td c" style="left:758px;width:25px"></div>
<div class="td r" style="left:783px;width:55px">2,993.33</div>
<div class="td r" style="left:838px;width:55px">1,496.67</div>
<div class="td r" style="left:893px;width:65px">2,993.33</div>
<div class="td r" style="left:958px;width:55px">0.00</div>
<div class="td c" style="left:1013px;width:25px"></div>
<div class="td l" style="left:1038px;width:60px"><span style="display:inline-block;transform:scaleX(0.818);transform-origin:0 0">XML</span></div>
<div class="td l" style="left:1098px;width:75px"></div>
</div>
</body></html>
